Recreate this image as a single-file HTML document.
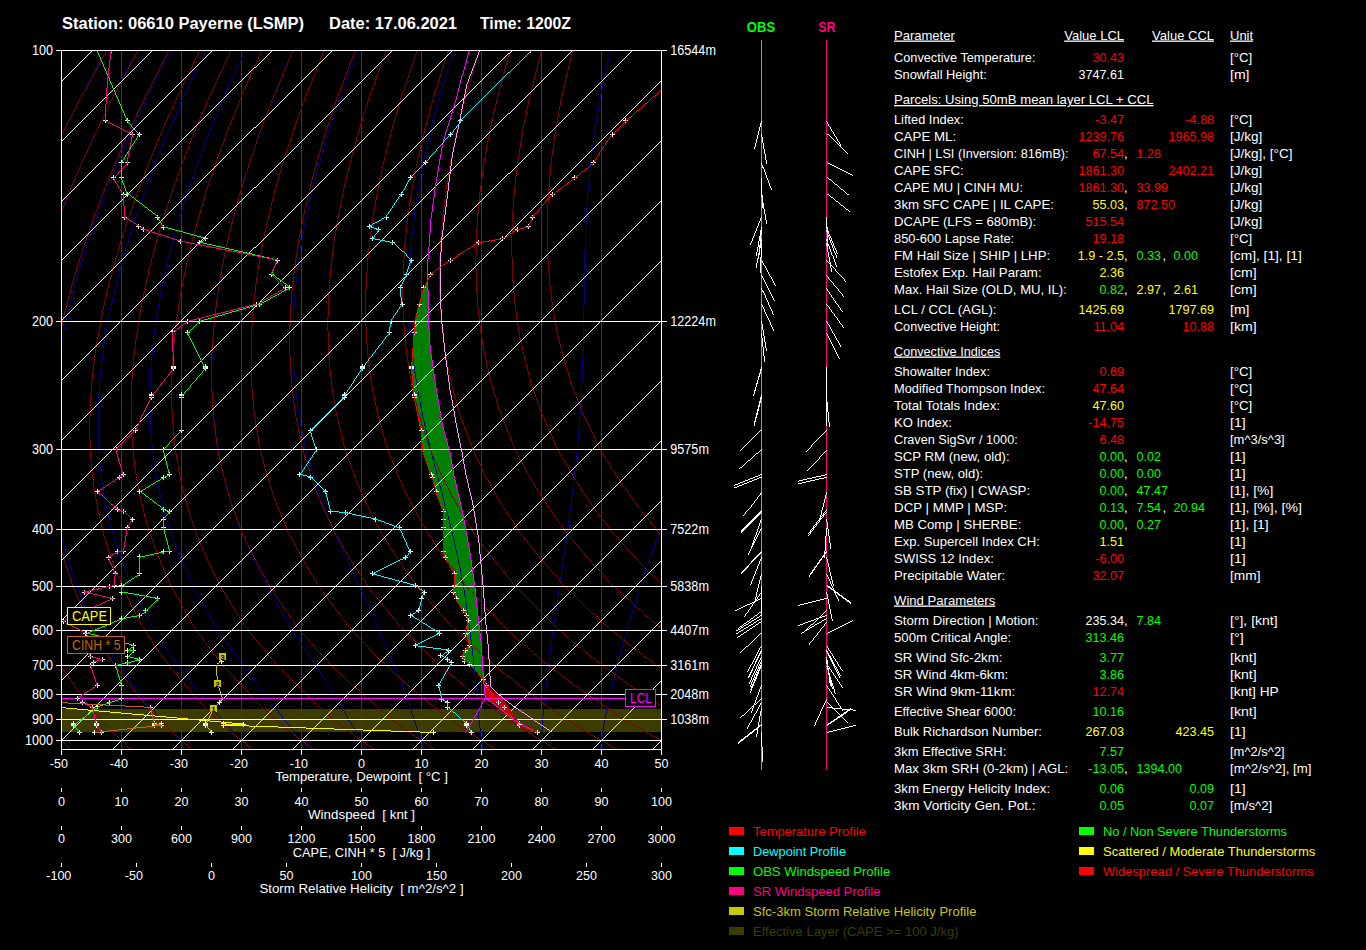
<!DOCTYPE html><html><head><meta charset="utf-8"><title>Sounding 06610 Payerne</title><style>html,body{margin:0;padding:0;background:#000;overflow:hidden}svg{display:block}text{white-space:pre}</style></head><body><svg width="1366" height="950" viewBox="0 0 1366 950" font-family="'Liberation Sans', sans-serif" shape-rendering="crispEdges">
<rect width="1366" height="950" fill="#000"/>
<defs><clipPath id="cp"><rect x="61.5" y="50.5" width="600.0" height="699.0"/></clipPath></defs>
<text x="62" y="28.5" font-size="16" fill="#fff" text-anchor="start" font-weight="bold" textLength="242" lengthAdjust="spacingAndGlyphs" >Station: 06610 Payerne (LSMP)</text>
<text x="329" y="28.5" font-size="16" fill="#fff" text-anchor="start" font-weight="bold" textLength="128" lengthAdjust="spacingAndGlyphs" >Date: 17.06.2021</text>
<text x="480" y="28.5" font-size="16" fill="#fff" text-anchor="start" font-weight="bold" textLength="91" lengthAdjust="spacingAndGlyphs" >Time: 1200Z</text>
<g clip-path="url(#cp)">
<rect x="61.5" y="709" width="600.0" height="23" fill="#3c3c00"/>
<polygon points="427.5,279.5 423.5,287.5 419.0,304.0 415.0,321.0 414.0,332.5 411.5,367.5 414.0,395.5 421.0,430.0 422.5,449.5 431.0,474.5 432.2,477.2 436.0,491.5 443.5,511.0 443.5,519.1 443.5,527.9 443.5,551.9 445.2,557.4 454.0,573.7 454.0,585.5 453.5,592.0 456.0,598.5 463.5,610.8 466.5,615.3 468.0,620.8 465.5,633.1 469.8,645.5 465.0,650.0 462.2,656.2 464.5,661.0 469.8,664.6 483.3,679.2 483.3,679.2 483.3,675.1 482.1,657.6 480.9,640.0 478.6,621.3 474.8,586.3 469.8,551.2 462.3,511.0 454.0,476.0 449.8,451.0 442.2,423.5 436.0,388.0 430.2,348.0 428.5,320.7 428.0,290.0 427.9,279.5" fill="#008000"/>
<line x1="121.5" y1="50.5" x2="121.5" y2="749.5" stroke="#006400" stroke-width="1" />
<line x1="181.5" y1="50.5" x2="181.5" y2="749.5" stroke="#006400" stroke-width="1" />
<line x1="241.5" y1="50.5" x2="241.5" y2="749.5" stroke="#006400" stroke-width="1" />
<line x1="301.5" y1="50.5" x2="301.5" y2="749.5" stroke="#006400" stroke-width="1" />
<line x1="361.5" y1="50.5" x2="361.5" y2="749.5" stroke="#006400" stroke-width="1" />
<line x1="421.5" y1="50.5" x2="421.5" y2="749.5" stroke="#006400" stroke-width="1" />
<line x1="481.5" y1="50.5" x2="481.5" y2="749.5" stroke="#006400" stroke-width="1" />
<line x1="541.5" y1="50.5" x2="541.5" y2="749.5" stroke="#006400" stroke-width="1" />
<line x1="601.5" y1="50.5" x2="601.5" y2="749.5" stroke="#006400" stroke-width="1" />
<polyline points="106.1,50.5 100.4,60.7 94.9,70.9 89.5,80.9 84.2,90.9 79.0,100.8 74.0,110.5 69.1,120.2 64.2,129.8 59.5,139.4 55.0,148.8 50.5,158.1 46.2,167.4 41.9,176.6 37.8,185.7 33.8,194.7 29.9,203.6 26.2,212.5 22.5,221.3 19.0,230.0 15.5,238.6 12.2,247.1 9.0,255.6 5.9,264.0 2.9,272.3 0.0,280.6 -2.8,288.7 -5.4,296.8 -8.0,304.9 -10.4,312.8 -12.8,320.7 -15.0,328.5 -17.2,336.3 -19.2,343.9 -21.1,351.5 -22.9,359.1 -24.6,366.6 -26.2,374.0 -27.8,381.3 -29.2,388.6 -30.5,395.8 -31.7,403.0 -32.8,410.1 -33.8,417.1 -34.7,424.1 -35.5,431.0 -36.2,437.9 -36.8,444.7 -37.3,451.4 -37.7,458.1 -38.1,464.8 -38.3,471.3 -38.4,477.9 -38.4,484.4 -38.4,490.8 -38.2,497.1 -38.0,503.5 -37.6,509.7 -37.2,516.0 -36.6,522.1 -36.0,528.2 -35.3,534.3 -34.5,540.3 -33.6,546.3 -32.6,552.3 -31.5,558.2 -30.4,564.0 -29.1,569.8 -27.8,575.6 -26.4,581.4 -24.9,587.1 -23.3,592.8 -21.7,598.4 -19.9,604.0 -18.1,609.6 -16.2,615.2 -14.2,620.6 -12.1,626.1 -9.9,631.5 -7.6,636.8 -5.2,642.1 -2.7,647.4 -0.1,652.6 2.6,657.8 5.3,662.9 8.2,668.0 11.2,673.0 14.2,678.0 17.3,683.0 20.5,688.0 23.8,693.0 27.1,697.9 30.5,702.9 33.9,707.8 37.5,712.7 41.2,717.5 45.0,722.2 49.0,726.9 53.0,731.5 57.2,736.0 61.5,740.5 61.6,740.6 61.7,740.7 61.8,740.8 61.9,740.9 62.0,741.0 62.0,741.1 62.1,741.2 62.2,741.3 62.3,741.4 62.4,741.5 62.5,741.5 62.6,741.6 62.7,741.7 62.8,741.8 62.9,741.9 63.0,742.0 63.1,742.1 63.2,742.2 63.2,742.3 63.3,742.4 63.4,742.5 63.5,742.6 63.6,742.7 63.7,742.8 63.8,742.9 63.9,743.0 64.0,743.1 64.1,743.2 64.2,743.3 64.3,743.4 64.4,743.4 64.4,743.5 64.5,743.6 64.6,743.7 64.7,743.8 64.8,743.9 64.9,744.0 65.0,744.1 65.1,744.2 65.2,744.3 65.3,744.4 65.4,744.5 65.5,744.6 65.6,744.7 65.6,744.8 65.7,744.9 65.8,745.0 65.9,745.1 66.0,745.2 66.1,745.3 66.2,745.3 66.3,745.4 66.4,745.5 66.5,745.6 66.6,745.7 66.7,745.8 66.8,745.9 66.9,746.0 67.0,746.1 67.0,746.2 67.1,746.3 67.2,746.4 67.3,746.5 67.4,746.6 67.5,746.7 67.6,746.8 67.7,746.9 67.8,747.0 67.9,747.1 68.0,747.2 68.1,747.2 68.2,747.3 68.3,747.4 68.4,747.5 68.4,747.6 68.5,747.7 68.6,747.8 68.7,747.9 68.8,748.0 68.9,748.1 69.0,748.2 69.1,748.3 69.2,748.4 69.3,748.5 69.4,748.6 69.5,748.7 69.6,748.8 69.7,748.9 69.8,749.0 69.9,749.0 69.9,749.1 70.0,749.2 70.1,749.3 70.2,749.4 70.3,749.5 70.4,749.6 70.5,749.7 70.6,749.8 70.7,749.9 70.8,750.0" fill="none" stroke="#000080" stroke-width="0.99" />
<polyline points="137.2,50.5 131.7,60.7 126.4,70.9 121.2,80.9 116.1,90.9 111.2,100.8 106.3,110.5 101.6,120.2 97.0,129.8 92.5,139.4 88.2,148.8 83.9,158.1 79.8,167.4 75.8,176.6 71.9,185.7 68.1,194.7 64.5,203.6 60.9,212.5 57.5,221.3 54.2,230.0 51.0,238.6 47.9,247.1 44.9,255.6 42.0,264.0 39.3,272.3 36.6,280.6 34.1,288.7 31.7,296.8 29.4,304.9 27.2,312.8 25.1,320.7 23.1,328.5 21.2,336.3 19.4,343.9 17.8,351.5 16.2,359.1 14.7,366.6 13.4,374.0 12.1,381.3 11.0,388.6 10.0,395.8 9.0,403.0 8.2,410.1 7.5,417.1 6.8,424.1 6.3,431.0 5.9,437.9 5.5,444.7 5.3,451.4 5.2,458.1 5.1,464.8 5.2,471.3 5.3,477.9 5.6,484.4 6.0,490.8 6.4,497.1 7.0,503.5 7.6,509.7 8.3,516.0 9.2,522.1 10.1,528.2 11.1,534.3 12.2,540.3 13.4,546.3 14.7,552.3 16.1,558.2 17.6,564.0 19.2,569.8 20.8,575.6 22.6,581.4 24.4,587.1 26.3,592.8 28.2,598.4 30.3,604.0 32.5,609.6 34.7,615.2 37.0,620.6 39.5,626.1 42.0,631.5 44.7,636.8 47.4,642.1 50.2,647.4 53.2,652.6 56.2,657.8 59.3,662.9 62.6,668.0 65.9,673.0 69.3,678.0 72.8,683.0 76.3,688.0 80.0,693.0 83.7,697.9 87.4,702.9 91.2,707.8 95.2,712.7 99.3,717.5 103.5,722.2 107.8,726.9 112.3,731.5 116.8,736.0 121.5,740.5 121.6,740.6 121.7,740.7 121.8,740.8 121.9,740.9 122.0,741.0 122.1,741.1 122.2,741.2 122.3,741.3 122.4,741.4 122.5,741.5 122.6,741.5 122.7,741.6 122.8,741.7 122.9,741.8 123.0,741.9 123.1,742.0 123.2,742.1 123.3,742.2 123.4,742.3 123.5,742.4 123.6,742.5 123.7,742.6 123.8,742.7 123.9,742.8 124.0,742.9 124.1,743.0 124.2,743.1 124.3,743.2 124.4,743.3 124.5,743.4 124.6,743.4 124.7,743.5 124.8,743.6 124.9,743.7 125.0,743.8 125.1,743.9 125.2,744.0 125.3,744.1 125.4,744.2 125.5,744.3 125.6,744.4 125.7,744.5 125.8,744.6 125.9,744.7 126.0,744.8 126.1,744.9 126.2,745.0 126.3,745.1 126.4,745.2 126.5,745.3 126.6,745.3 126.7,745.4 126.8,745.5 126.9,745.6 127.0,745.7 127.1,745.8 127.2,745.9 127.3,746.0 127.4,746.1 127.5,746.2 127.6,746.3 127.8,746.4 127.9,746.5 128.0,746.6 128.1,746.7 128.2,746.8 128.3,746.9 128.4,747.0 128.5,747.1 128.6,747.2 128.7,747.2 128.8,747.3 128.9,747.4 129.0,747.5 129.1,747.6 129.2,747.7 129.3,747.8 129.4,747.9 129.5,748.0 129.6,748.1 129.7,748.2 129.8,748.3 129.9,748.4 130.0,748.5 130.1,748.6 130.2,748.7 130.3,748.8 130.4,748.9 130.5,749.0 130.6,749.0 130.7,749.1 130.8,749.2 130.9,749.3 131.0,749.4 131.1,749.5 131.2,749.6 131.3,749.7 131.4,749.8 131.5,749.9 131.6,750.0" fill="none" stroke="#000080" stroke-width="0.99" />
<polyline points="170.7,50.5 165.5,60.7 160.4,70.9 155.4,80.9 150.5,90.9 145.8,100.8 141.2,110.5 136.7,120.2 132.3,129.8 128.1,139.4 124.0,148.8 120.0,158.1 116.1,167.4 112.3,176.6 108.7,185.7 105.1,194.7 101.7,203.6 98.4,212.5 95.2,221.3 92.2,230.0 89.2,238.6 86.4,247.1 83.7,255.6 81.0,264.0 78.5,272.3 76.2,280.6 73.9,288.7 71.7,296.8 69.7,304.9 67.8,312.8 65.9,320.7 64.2,328.5 62.6,336.3 61.1,343.9 59.7,351.5 58.4,359.1 57.2,366.6 56.2,374.0 55.2,381.3 54.3,388.6 53.6,395.8 52.9,403.0 52.4,410.1 51.9,417.1 51.6,424.1 51.4,431.0 51.2,437.9 51.2,444.7 51.3,451.4 51.4,458.1 51.7,464.8 52.1,471.3 52.5,477.9 53.1,484.4 53.8,490.8 54.6,497.1 55.4,503.5 56.4,509.7 57.4,516.0 58.6,522.1 59.8,528.2 61.2,534.3 62.6,540.3 64.2,546.3 65.8,552.3 67.5,558.2 69.4,564.0 71.2,569.8 73.2,575.6 75.3,581.4 77.5,587.1 79.7,592.8 82.0,598.4 84.4,604.0 86.9,609.6 89.5,615.2 92.2,620.6 94.9,626.1 97.8,631.5 100.8,636.8 103.9,642.1 107.0,647.4 110.3,652.6 113.6,657.8 117.1,662.9 120.6,668.0 124.2,673.0 127.9,678.0 131.6,683.0 135.5,688.0 139.3,693.0 143.2,697.9 147.1,702.9 151.1,707.8 155.2,712.7 159.4,717.5 163.6,722.2 166.6,726.9 171.5,731.5 176.4,736.0 181.5,740.5 181.6,740.6 181.7,740.7 181.8,740.8 181.9,740.9 182.0,741.0 182.1,741.1 182.3,741.2 182.4,741.3 182.5,741.4 182.6,741.5 182.7,741.5 182.8,741.6 182.9,741.7 183.0,741.8 183.1,741.9 183.2,742.0 183.3,742.1 183.5,742.2 183.6,742.3 183.7,742.4 183.8,742.5 183.9,742.6 184.0,742.7 184.1,742.8 184.2,742.9 184.3,743.0 184.4,743.1 184.5,743.2 184.7,743.3 184.8,743.4 184.9,743.4 185.0,743.5 185.1,743.6 185.2,743.7 185.3,743.8 185.4,743.9 185.5,744.0 185.6,744.1 185.7,744.2 185.9,744.3 186.0,744.4 186.1,744.5 186.2,744.6 186.3,744.7 186.4,744.8 186.5,744.9 186.6,745.0 186.7,745.1 186.8,745.2 187.0,745.3 187.1,745.3 187.2,745.4 187.3,745.5 187.4,745.6 187.5,745.7 187.6,745.8 187.7,745.9 187.8,746.0 187.9,746.1 188.1,746.2 188.2,746.3 188.3,746.4 188.4,746.5 188.5,746.6 188.6,746.7 188.7,746.8 188.8,746.9 188.9,747.0 189.0,747.1 189.2,747.2 189.3,747.2 189.4,747.3 189.5,747.4 189.6,747.5 189.7,747.6 189.8,747.7 189.9,747.8 190.0,747.9 190.1,748.0 190.3,748.1 190.4,748.2 190.5,748.3 190.6,748.4 190.7,748.5 190.8,748.6 190.9,748.7 191.0,748.8 191.1,748.9 191.3,749.0 191.4,749.0 191.5,749.1 191.6,749.2 191.7,749.3 191.8,749.4 191.9,749.5 192.0,749.6 192.1,749.7 192.3,749.8 192.4,749.9 192.5,750.0" fill="none" stroke="#000080" stroke-width="0.99" />
<polyline points="205.5,50.5 200.5,60.7 195.6,70.9 190.9,80.9 186.2,90.9 181.7,100.8 177.4,110.5 173.1,120.2 169.0,129.8 165.0,139.4 161.1,148.8 157.3,158.1 153.7,167.4 150.2,176.6 146.8,185.7 143.5,194.7 140.3,203.6 137.3,212.5 134.4,221.3 131.6,230.0 128.9,238.6 126.3,247.1 123.8,255.6 121.5,264.0 119.3,272.3 117.2,280.6 115.2,288.7 113.3,296.8 111.5,304.9 109.8,312.8 108.3,320.7 106.8,328.5 105.5,336.3 104.3,343.9 103.2,351.5 102.2,359.1 101.3,366.6 100.5,374.0 99.9,381.3 99.3,388.6 98.8,395.8 98.5,403.0 98.2,410.1 98.1,417.1 98.1,424.1 98.1,431.0 98.3,437.9 98.6,444.7 99.0,451.4 99.4,458.1 100.0,464.8 100.7,471.3 101.5,477.9 102.4,484.4 103.4,490.8 104.5,497.1 105.7,503.5 107.0,509.7 108.4,516.0 109.8,522.1 111.4,528.2 113.1,534.3 114.9,540.3 116.8,546.3 118.7,552.3 120.8,558.2 123.0,564.0 125.2,569.8 127.5,575.6 129.9,581.4 132.4,587.1 135.0,592.8 137.7,598.4 140.4,604.0 143.2,609.6 146.1,615.2 149.1,620.6 152.2,626.1 155.4,631.5 158.7,636.8 162.1,642.1 165.5,647.4 169.1,652.6 172.7,657.8 176.4,662.9 180.1,668.0 184.0,673.0 187.9,678.0 191.8,683.0 195.8,688.0 199.8,693.0 203.8,697.9 207.8,702.9 211.8,707.8 215.9,712.7 220.1,717.5 224.3,722.2 228.5,726.9 232.8,731.5 236.0,736.0 241.5,740.5 241.6,740.6 241.7,740.7 241.8,740.8 242.0,740.9 242.1,741.0 242.2,741.1 242.3,741.2 242.4,741.3 242.6,741.4 242.7,741.5 242.8,741.5 242.9,741.6 243.0,741.7 243.1,741.8 243.3,741.9 243.4,742.0 243.5,742.1 243.6,742.2 243.7,742.3 243.8,742.4 244.0,742.5 244.1,742.6 244.2,742.7 244.3,742.8 244.4,742.9 244.5,743.0 244.7,743.1 244.8,743.2 244.9,743.3 245.0,743.4 245.1,743.4 245.2,743.5 245.4,743.6 245.5,743.7 245.6,743.8 245.7,743.9 245.8,744.0 246.0,744.1 246.1,744.2 246.2,744.3 246.3,744.4 246.4,744.5 246.5,744.6 246.7,744.7 246.8,744.8 246.9,744.9 247.0,745.0 247.1,745.1 247.3,745.2 247.4,745.3 247.5,745.3 247.6,745.4 247.7,745.5 247.8,745.6 248.0,745.7 248.1,745.8 248.2,745.9 248.3,746.0 248.4,746.1 248.6,746.2 247.1,746.3 247.1,746.4 247.2,746.5 247.3,746.6 247.4,746.7 247.5,746.8 247.6,746.9 247.7,747.0 247.8,747.1 247.9,747.2 248.0,747.2 248.1,747.3 248.1,747.4 248.2,747.5 248.3,747.6 248.4,747.7 248.5,747.8 248.6,747.9 248.7,748.0 248.8,748.1 248.9,748.2 249.0,748.3 249.0,748.4 249.1,748.5 249.2,748.6 249.3,748.7 249.4,748.8 249.5,748.9 249.6,749.0 249.7,749.0 249.8,749.1 249.9,749.2 249.9,749.3 250.0,749.4 250.1,749.5 250.2,749.6 250.3,749.7 250.4,749.8 250.5,749.9 250.6,750.0" fill="none" stroke="#000080" stroke-width="0.99" />
<polyline points="244.7,50.5 240.0,60.7 235.4,70.9 230.9,80.9 226.5,90.9 222.3,100.8 218.2,110.5 214.2,120.2 210.4,129.8 206.6,139.4 203.0,148.8 199.5,158.1 196.2,167.4 192.9,176.6 189.8,185.7 186.8,194.7 183.9,203.6 181.2,212.5 178.5,221.3 176.0,230.0 173.6,238.6 171.4,247.1 169.2,255.6 167.1,264.0 165.2,272.3 163.4,280.6 161.7,288.7 160.1,296.8 158.7,304.9 157.3,312.8 156.1,320.7 155.0,328.5 153.9,336.3 153.1,343.9 152.3,351.5 151.6,359.1 151.0,366.6 150.6,374.0 150.2,381.3 150.0,388.6 149.9,395.8 149.9,403.0 150.0,410.1 150.2,417.1 150.5,424.1 150.9,431.0 151.4,437.9 152.0,444.7 152.7,451.4 153.6,458.1 154.5,464.8 155.6,471.3 156.7,477.9 158.0,484.4 159.3,490.8 160.8,497.1 162.3,503.5 164.0,509.7 165.7,516.0 167.6,522.1 169.5,528.2 171.6,534.3 173.7,540.3 176.0,546.3 178.3,552.3 180.7,558.2 183.2,564.0 185.8,569.8 188.5,575.6 191.2,581.4 194.1,587.1 197.0,592.8 199.9,598.4 203.0,604.0 206.1,609.6 209.3,615.2 212.6,620.6 215.9,626.1 219.3,631.5 222.8,636.8 226.4,642.1 230.0,647.4 233.6,652.6 237.3,657.8 241.1,662.9 244.9,668.0 248.7,673.0 252.6,678.0 256.4,683.0 260.3,688.0 264.1,693.0 267.8,697.9 271.6,702.9 275.3,707.8 279.1,712.7 282.8,717.5 286.5,722.2 290.3,726.9 294.1,731.5 297.8,736.0 301.5,740.5 301.6,740.6 301.7,740.7 301.9,740.8 302.0,740.9 302.1,741.0 302.3,741.1 302.4,741.2 302.5,741.3 302.6,741.4 302.8,741.5 302.9,741.5 303.0,741.6 303.1,741.7 303.3,741.8 303.4,741.9 303.5,742.0 303.6,742.1 303.8,742.2 303.9,742.3 304.0,742.4 304.1,742.5 304.3,742.6 304.4,742.7 304.5,742.8 304.6,742.9 304.8,743.0 304.9,743.1 305.0,743.2 305.1,743.3 305.3,743.4 305.4,743.4 305.5,743.5 305.6,743.6 304.1,743.7 304.2,743.8 304.3,743.9 304.4,744.0 304.4,744.1 304.5,744.2 304.6,744.3 304.7,744.4 304.7,744.5 304.8,744.6 304.9,744.7 305.0,744.8 305.0,744.9 305.1,745.0 305.2,745.1 305.3,745.2 305.4,745.3 305.4,745.3 305.5,745.4 305.6,745.5 305.7,745.6 305.7,745.7 305.8,745.8 305.9,745.9 306.0,746.0 306.0,746.1 306.1,746.2 306.2,746.3 306.3,746.4 306.3,746.5 306.4,746.6 306.5,746.7 306.6,746.8 306.6,746.9 306.7,747.0 306.8,747.1 306.9,747.2 306.9,747.2 307.0,747.3 307.1,747.4 307.2,747.5 307.2,747.6 307.3,747.7 307.4,747.8 307.5,747.9 307.5,748.0 307.6,748.1 307.7,748.2 307.8,748.3 307.9,748.4 307.9,748.5 308.0,748.6 308.1,748.7 308.2,748.8 308.2,748.9 308.3,749.0 308.4,749.0 308.4,749.1 308.5,749.2 308.6,749.3 308.7,749.4 308.7,749.5 308.8,749.6 308.9,749.7 309.0,749.8 309.0,749.9 309.1,750.0" fill="none" stroke="#000080" stroke-width="0.99" />
<polyline points="292.7,50.5 288.3,60.7 284.0,70.9 279.9,80.9 275.8,90.9 271.9,100.8 268.1,110.5 264.5,120.2 261.0,129.8 257.6,139.4 254.3,148.8 251.2,158.1 248.1,167.4 245.2,176.6 242.5,185.7 239.8,194.7 237.3,203.6 234.9,212.5 232.6,221.3 230.4,230.0 228.4,238.6 226.5,247.1 224.7,255.6 223.0,264.0 221.5,272.3 220.0,280.6 218.7,288.7 217.5,296.8 216.4,304.9 215.4,312.8 214.6,320.7 213.8,328.5 213.2,336.3 212.7,343.9 212.3,351.5 212.0,359.1 211.9,366.6 211.8,374.0 211.9,381.3 212.0,388.6 212.3,395.8 212.7,403.0 213.2,410.1 213.8,417.1 214.6,424.1 215.4,431.0 216.3,437.9 217.4,444.7 218.5,451.4 219.8,458.1 221.1,464.8 222.6,471.3 224.2,477.9 225.8,484.4 227.6,490.8 229.5,497.1 231.4,503.5 233.5,509.7 235.6,516.0 237.9,522.1 240.2,528.2 242.6,534.3 245.2,540.3 247.8,546.3 250.4,552.3 253.2,558.2 256.0,564.0 258.9,569.8 261.8,575.6 264.8,581.4 267.9,587.1 271.0,592.8 274.1,598.4 277.3,604.0 280.5,609.6 283.7,615.2 287.0,620.6 290.3,626.1 293.6,631.5 297.0,636.8 300.3,642.1 303.7,647.4 307.1,652.6 310.4,657.8 313.8,662.9 317.1,668.0 320.4,673.0 323.7,678.0 326.9,683.0 330.0,688.0 333.1,693.0 336.1,697.9 339.1,702.9 342.0,707.8 344.8,712.7 347.6,717.5 350.5,722.2 353.3,726.9 356.0,731.5 358.8,736.0 361.5,740.5 361.6,740.6 361.8,740.7 361.9,740.8 362.0,740.9 362.2,741.0 362.3,741.1 362.4,741.2 362.6,741.3 362.7,741.4 362.8,741.5 363.0,741.5 363.1,741.6 363.2,741.7 363.4,741.8 363.5,741.9 363.6,742.0 363.8,742.1 363.9,742.2 364.0,742.3 364.2,742.4 362.7,742.5 362.7,742.6 362.8,742.7 362.8,742.8 362.9,742.9 363.0,743.0 363.0,743.1 363.1,743.2 363.1,743.3 363.2,743.4 363.2,743.4 363.3,743.5 363.4,743.6 363.4,743.7 363.5,743.8 363.5,743.9 363.6,744.0 363.6,744.1 363.7,744.2 363.7,744.3 363.8,744.4 363.9,744.5 363.9,744.6 364.0,744.7 364.0,744.8 364.1,744.9 364.1,745.0 364.2,745.1 364.2,745.2 364.3,745.3 364.3,745.3 364.4,745.4 364.5,745.5 364.5,745.6 364.6,745.7 364.6,745.8 364.7,745.9 364.7,746.0 364.8,746.1 364.8,746.2 364.9,746.3 364.9,746.4 365.0,746.5 365.1,746.6 365.1,746.7 365.2,746.8 365.2,746.9 365.3,747.0 365.3,747.1 365.4,747.2 365.4,747.2 365.5,747.3 365.5,747.4 365.6,747.5 365.7,747.6 365.7,747.7 365.8,747.8 365.8,747.9 365.9,748.0 365.9,748.1 366.0,748.2 366.0,748.3 366.1,748.4 366.1,748.5 366.2,748.6 366.2,748.7 366.3,748.8 366.4,748.9 366.4,749.0 366.5,749.0 366.5,749.1 366.6,749.2 366.6,749.3 366.7,749.4 366.7,749.5 366.8,749.6 366.8,749.7 366.9,749.8 366.9,749.9 367.0,750.0" fill="none" stroke="#000080" stroke-width="0.99" />
<polyline points="357.5,50.5 353.5,60.7 349.6,70.9 345.9,80.9 342.3,90.9 338.8,100.8 335.5,110.5 332.3,120.2 329.2,129.8 326.3,139.4 323.4,148.8 320.7,158.1 318.2,167.4 315.8,176.6 313.4,185.7 311.3,194.7 309.2,203.6 307.3,212.5 305.5,221.3 303.8,230.0 302.2,238.6 300.8,247.1 299.5,255.6 298.3,264.0 297.3,272.3 296.3,280.6 295.5,288.7 294.8,296.8 294.2,304.9 293.7,312.8 293.4,320.7 293.2,328.5 293.1,336.3 293.1,343.9 293.2,351.5 293.5,359.1 293.8,366.6 294.3,374.0 294.9,381.3 295.6,388.6 296.4,395.8 297.3,403.0 298.3,410.1 299.4,417.1 300.7,424.1 302.0,431.0 303.4,437.9 305.0,444.7 306.6,451.4 308.3,458.1 310.2,464.8 312.1,471.3 314.1,477.9 316.2,484.4 318.3,490.8 320.6,497.1 322.9,503.5 325.3,509.7 327.7,516.0 330.2,522.1 332.7,528.2 335.3,534.3 338.0,540.3 340.6,546.3 343.3,552.3 346.0,558.2 348.8,564.0 351.5,569.8 354.2,575.6 356.9,581.4 359.6,587.1 362.2,592.8 364.8,598.4 367.4,604.0 370.0,609.6 372.5,615.2 375.0,620.6 377.4,626.1 379.9,631.5 382.2,636.8 384.6,642.1 386.9,647.4 389.1,652.6 391.3,657.8 393.5,662.9 395.6,668.0 397.7,673.0 399.7,678.0 401.6,683.0 403.5,688.0 405.3,693.0 407.1,697.9 408.7,702.9 410.4,707.8 412.0,712.7 413.5,717.5 415.1,722.2 416.7,726.9 418.3,731.5 419.9,736.0 421.5,740.5 421.6,740.6 421.8,740.7 421.9,740.8 422.1,740.9 422.2,741.0 422.4,741.1 422.5,741.2 422.6,741.3 422.8,741.4 422.9,741.5 423.1,741.5 423.2,741.6 423.3,741.7 423.5,741.8 422.0,741.9 422.0,742.0 422.1,742.1 422.1,742.2 422.1,742.3 422.2,742.4 422.2,742.5 422.2,742.6 422.2,742.7 422.3,742.8 422.3,742.9 422.3,743.0 422.4,743.1 422.4,743.2 422.4,743.3 422.5,743.4 422.5,743.4 422.5,743.5 422.6,743.6 422.6,743.7 422.6,743.8 422.7,743.9 422.7,744.0 422.7,744.1 422.8,744.2 422.8,744.3 422.8,744.4 422.9,744.5 422.9,744.6 422.9,744.7 423.0,744.8 423.0,744.9 423.0,745.0 423.1,745.1 423.1,745.2 423.1,745.3 423.1,745.3 423.2,745.4 423.2,745.5 423.2,745.6 423.3,745.7 423.3,745.8 423.3,745.9 423.4,746.0 423.4,746.1 423.4,746.2 423.5,746.3 423.5,746.4 423.5,746.5 423.6,746.6 423.6,746.7 423.6,746.8 423.7,746.9 423.7,747.0 423.7,747.1 423.7,747.2 423.8,747.2 423.8,747.3 423.8,747.4 423.9,747.5 423.9,747.6 423.9,747.7 424.0,747.8 424.0,747.9 424.0,748.0 424.1,748.1 424.1,748.2 424.1,748.3 424.2,748.4 424.2,748.5 424.2,748.6 424.2,748.7 424.3,748.8 424.3,748.9 424.3,749.0 424.4,749.0 424.4,749.1 424.4,749.2 424.5,749.3 424.5,749.4 424.5,749.5 424.6,749.6 424.6,749.7 424.6,749.8 424.6,749.9 424.7,750.0" fill="none" stroke="#000080" stroke-width="0.99" />
<polyline points="453.7,50.5 450.3,60.7 447.1,70.9 444.0,80.9 441.1,90.9 438.2,100.8 435.6,110.5 433.0,120.2 430.6,129.8 428.3,139.4 426.2,148.8 424.2,158.1 422.3,167.4 420.5,176.6 418.9,185.7 417.4,194.7 416.0,203.6 414.8,212.5 413.7,221.3 412.7,230.0 411.9,238.6 411.1,247.1 410.5,255.6 410.1,264.0 409.7,272.3 409.5,280.6 409.3,288.7 409.3,296.8 409.4,304.9 409.7,312.8 410.0,320.7 410.4,328.5 411.0,336.3 411.6,343.9 412.4,351.5 413.3,359.1 414.2,366.6 415.2,374.0 416.4,381.3 417.6,388.6 418.9,395.8 420.2,403.0 421.6,410.1 423.1,417.1 424.6,424.1 426.2,431.0 427.8,437.9 429.5,444.7 431.1,451.4 432.8,458.1 434.5,464.8 436.3,471.3 438.0,477.9 439.7,484.4 441.4,490.8 443.0,497.1 444.7,503.5 446.3,509.7 447.9,516.0 449.5,522.1 451.0,528.2 452.5,534.3 453.9,540.3 455.3,546.3 456.6,552.3 457.9,558.2 459.1,564.0 460.3,569.8 461.4,575.6 462.5,581.4 463.5,587.1 464.5,592.8 465.4,598.4 466.2,604.0 467.0,609.6 467.8,615.2 468.6,620.6 469.3,626.1 470.0,631.5 470.6,636.8 471.3,642.1 471.9,647.4 472.6,652.6 473.2,657.8 473.8,662.9 474.4,668.0 474.9,673.0 475.5,678.0 476.0,683.0 476.5,688.0 476.9,693.0 477.3,697.9 477.7,702.9 478.1,707.8 478.5,712.7 478.9,717.5 479.4,722.2 479.9,726.9 480.4,731.5 480.9,736.0 481.5,740.5 481.7,740.6 481.8,740.7 482.0,740.8 482.1,740.9 482.3,741.0 482.4,741.1 482.6,741.2 482.7,741.3 482.9,741.4 483.0,741.5 483.2,741.5 481.6,741.6 481.7,741.7 481.7,741.8 481.7,741.9 481.7,742.0 481.7,742.1 481.7,742.2 481.7,742.3 481.7,742.4 481.7,742.5 481.8,742.6 481.8,742.7 481.8,742.8 481.8,742.9 481.8,743.0 481.8,743.1 481.8,743.2 481.8,743.3 481.9,743.4 481.9,743.4 481.9,743.5 481.9,743.6 481.9,743.7 481.9,743.8 481.9,743.9 481.9,744.0 481.9,744.1 482.0,744.2 482.0,744.3 482.0,744.4 482.0,744.5 482.0,744.6 482.0,744.7 482.0,744.8 482.0,744.9 482.0,745.0 482.1,745.1 482.1,745.2 482.1,745.3 482.1,745.3 482.1,745.4 482.1,745.5 482.1,745.6 482.1,745.7 482.2,745.8 482.2,745.9 482.2,746.0 482.2,746.1 482.2,746.2 482.2,746.3 482.2,746.4 482.2,746.5 482.2,746.6 482.3,746.7 482.3,746.8 482.3,746.9 482.3,747.0 482.3,747.1 482.3,747.2 482.3,747.2 482.3,747.3 482.3,747.4 482.4,747.5 482.4,747.6 482.4,747.7 482.4,747.8 482.4,747.9 482.4,748.0 482.4,748.1 482.4,748.2 482.4,748.3 482.5,748.4 482.5,748.5 482.5,748.6 482.5,748.7 482.5,748.8 482.5,748.9 482.5,749.0 482.5,749.0 482.5,749.1 482.6,749.2 482.6,749.3 482.6,749.4 482.6,749.5 482.6,749.6 482.6,749.7 482.6,749.8 482.6,749.9 482.6,750.0" fill="none" stroke="#000080" stroke-width="0.99" />
<polyline points="610.3,50.5 607.9,60.7 605.7,70.9 603.6,80.9 601.6,90.9 599.8,100.8 598.1,110.5 596.5,120.2 595.0,129.8 593.6,139.4 592.4,148.8 591.3,158.1 590.3,167.4 589.4,176.6 588.5,185.7 587.8,194.7 587.2,203.6 586.6,212.5 586.2,221.3 585.8,230.0 585.4,238.6 585.1,247.1 584.9,255.6 584.7,264.0 584.5,272.3 584.4,280.6 584.2,288.7 584.1,296.8 584.0,304.9 583.9,312.8 583.8,320.7 583.6,328.5 583.5,336.3 583.3,343.9 583.1,351.5 582.9,359.1 582.7,366.6 582.4,374.0 582.0,381.3 581.7,388.6 581.3,395.8 580.9,403.0 580.4,410.1 579.9,417.1 579.4,424.1 578.9,431.0 578.3,437.9 577.7,444.7 577.0,451.4 576.3,458.1 575.6,464.8 574.9,471.3 574.2,477.9 573.5,484.4 572.7,490.8 571.9,497.1 571.1,503.5 570.3,509.7 569.5,516.0 568.7,522.1 567.8,528.2 567.0,534.3 566.2,540.3 565.3,546.3 564.5,552.3 563.7,558.2 562.8,564.0 562.0,569.8 561.1,575.6 560.3,581.4 559.4,587.1 558.6,592.8 557.7,598.4 556.9,604.0 556.0,609.6 555.2,615.2 554.4,620.6 553.6,626.1 552.8,631.5 552.1,636.8 551.4,642.1 550.7,647.4 550.0,652.6 549.4,657.8 548.8,662.9 548.2,668.0 547.6,673.0 547.1,678.0 546.5,683.0 546.0,688.0 545.4,693.0 544.9,697.9 544.3,702.9 543.8,707.8 543.3,712.7 542.8,717.5 542.5,722.2 542.2,726.9 541.9,731.5 541.7,736.0 541.5,740.5 541.7,740.6 541.8,740.7 542.0,740.8 542.1,740.9 542.3,741.0 542.5,741.1 542.6,741.2 542.8,741.3 542.9,741.4 541.5,741.5 541.5,741.5 541.5,741.6 541.5,741.7 541.4,741.8 541.4,741.9 541.4,742.0 541.4,742.1 541.4,742.2 541.4,742.3 541.4,742.4 541.4,742.5 541.4,742.6 541.4,742.7 541.4,742.8 541.4,742.9 541.4,743.0 541.4,743.1 541.4,743.2 541.4,743.3 541.4,743.4 541.4,743.4 541.4,743.5 541.4,743.6 541.4,743.7 541.4,743.8 541.4,743.9 541.4,744.0 541.4,744.1 541.4,744.2 541.4,744.3 541.3,744.4 541.3,744.5 541.3,744.6 541.3,744.7 541.3,744.8 541.3,744.9 541.3,745.0 541.3,745.1 541.3,745.2 541.3,745.3 541.3,745.3 541.3,745.4 541.3,745.5 541.3,745.6 541.3,745.7 541.3,745.8 541.3,745.9 541.3,746.0 541.3,746.1 541.3,746.2 541.3,746.3 541.3,746.4 541.3,746.5 541.3,746.6 541.3,746.7 541.3,746.8 541.3,746.9 541.3,747.0 541.2,747.1 541.2,747.2 541.2,747.2 541.2,747.3 541.2,747.4 541.2,747.5 541.2,747.6 541.2,747.7 541.2,747.8 541.2,747.9 541.2,748.0 541.2,748.1 541.2,748.2 541.2,748.3 541.2,748.4 541.2,748.5 541.2,748.6 541.2,748.7 541.2,748.8 541.2,748.9 541.2,749.0 541.2,749.0 541.2,749.1 541.2,749.2 541.2,749.3 541.2,749.4 541.2,749.5 541.1,749.6 541.1,749.7 541.1,749.8 541.1,749.9 541.1,750.0" fill="none" stroke="#000080" stroke-width="0.99" />
<polyline points="855.2,50.5 851.5,60.7 847.8,70.9 844.0,80.9 840.3,90.9 836.5,100.8 832.8,110.5 829.0,120.2 825.2,129.8 821.4,139.4 817.7,148.8 813.9,158.1 810.1,167.4 806.3,176.6 802.6,185.7 798.8,194.7 795.1,203.6 791.4,212.5 787.7,221.3 784.0,230.0 780.3,238.6 776.6,247.1 773.0,255.6 769.4,264.0 765.8,272.3 762.3,280.6 758.7,288.7 755.3,296.8 751.8,304.9 748.4,312.8 745.0,320.7 741.6,328.5 738.3,336.3 735.0,343.9 731.7,351.5 728.5,359.1 725.3,366.6 722.1,374.0 719.0,381.3 716.0,388.6 712.9,395.8 709.9,403.0 707.0,410.1 704.1,417.1 701.2,424.1 698.3,431.0 695.6,437.9 692.8,444.7 690.1,451.4 687.4,458.1 684.8,464.8 682.2,471.3 679.6,477.9 677.1,484.4 674.6,490.8 672.2,497.1 669.8,503.5 667.5,509.7 665.2,516.0 662.9,522.1 660.7,528.2 658.5,534.3 656.3,540.3 654.2,546.3 652.1,552.3 650.1,558.2 648.1,564.0 646.1,569.8 644.2,575.6 642.2,581.4 640.4,587.1 638.5,592.8 636.7,598.4 634.9,604.0 633.1,609.6 631.4,615.2 629.7,620.6 628.1,626.1 626.5,631.5 625.0,636.8 623.5,642.1 622.0,647.4 620.6,652.6 619.3,657.8 617.9,662.9 616.7,668.0 615.4,673.0 614.2,678.0 613.1,683.0 611.9,688.0 610.7,693.0 609.6,697.9 608.5,702.9 607.4,707.8 606.3,712.7 605.3,717.5 604.4,722.2 603.6,726.9 602.9,731.5 602.2,736.0 601.5,740.5 601.7,740.6 601.8,740.7 602.0,740.8 602.2,740.9 602.3,741.0 602.5,741.1 602.7,741.2 602.8,741.3 601.4,741.4 601.4,741.5 601.3,741.5 601.3,741.6 601.3,741.7 601.3,741.8 601.3,741.9 601.3,742.0 601.3,742.1 601.3,742.2 601.2,742.3 601.2,742.4 601.2,742.5 601.2,742.6 601.2,742.7 601.2,742.8 601.2,742.9 601.1,743.0 601.1,743.1 601.1,743.2 601.1,743.3 601.1,743.4 601.1,743.4 601.1,743.5 601.1,743.6 601.0,743.7 601.0,743.8 601.0,743.9 601.0,744.0 601.0,744.1 601.0,744.2 601.0,744.3 600.9,744.4 600.9,744.5 600.9,744.6 600.9,744.7 600.9,744.8 600.9,744.9 600.9,745.0 600.9,745.1 600.8,745.2 600.8,745.3 600.8,745.3 600.8,745.4 600.8,745.5 600.8,745.6 600.8,745.7 600.7,745.8 600.7,745.9 600.7,746.0 600.7,746.1 600.7,746.2 600.7,746.3 600.7,746.4 600.7,746.5 600.6,746.6 600.6,746.7 600.6,746.8 600.6,746.9 600.6,747.0 600.6,747.1 600.6,747.2 600.5,747.2 600.5,747.3 600.5,747.4 600.5,747.5 600.5,747.6 600.5,747.7 600.5,747.8 600.5,747.9 600.4,748.0 600.4,748.1 600.4,748.2 600.4,748.3 600.4,748.4 600.4,748.5 600.4,748.6 600.3,748.7 600.3,748.8 600.3,748.9 600.3,749.0 600.3,749.0 600.3,749.1 600.3,749.2 600.3,749.3 600.2,749.4 600.2,749.5 600.2,749.6 600.2,749.7 600.2,749.8 600.2,749.9 600.2,750.0" fill="none" stroke="#000080" stroke-width="0.99" />
<polyline points="106.1,50.5 83.5,92.3 64.6,129.1 48.8,161.8 35.3,191.2 23.9,217.9 14.1,242.1 5.7,264.4 -1.5,284.9 -7.7,303.9 -13.0,321.5 -17.6,338.0 -21.6,353.4 -24.9,367.8 -27.8,381.5 -30.2,394.3 -32.2,406.5 -33.9,418.1 -35.3,429.1 -36.4,439.5 -37.2,449.5 -37.8,459.0 -38.2,468.2 -38.4,476.9 -38.4,485.3 -38.3,493.4 -38.1,501.1 -37.7,508.6 -37.2,515.8 -36.6,522.8 -35.9,529.5 -35.1,536.0 -34.2,542.3 -33.3,548.4 -32.2,554.3 -31.2,560.0 -30.0,565.6 -28.8,571.1 -27.6,576.3 -26.3,581.5 -25.0,586.5 -23.7,591.4 -22.3,596.2 -20.9,600.8 -19.5,605.4 -18.0,609.8 -16.6,614.2 -15.0,618.4 -13.5,622.5 -11.9,626.6 -10.3,630.5 -8.7,634.4 -7.0,638.1 -5.4,641.8 -3.7,645.4 -2.0,648.9 -0.3,652.4 1.5,655.8 3.2,659.1 5.0,662.3 6.8,665.5 8.6,668.6 10.4,671.7 12.2,674.7 14.0,677.7 15.8,680.6 17.6,683.4 19.4,686.3 21.2,689.0 23.0,691.8 24.8,694.5 26.6,697.2 28.4,699.8 30.2,702.4 32.0,705.0 33.7,707.5 35.5,710.0 37.3,712.4 39.1,714.8 41.0,717.2 42.8,719.5 44.6,721.8 46.5,724.0 48.4,726.2 50.2,728.3 52.1,730.4 54.0,732.5 55.9,734.5 57.7,736.5 59.6,738.5 61.5,740.5 63.4,742.4 65.2,744.4 67.1,746.3 69.0,748.1 70.8,750.0" fill="none" stroke="#800000" stroke-width="0.99" />
<polyline points="137.2,50.5 115.4,92.3 97.4,129.1 82.3,161.8 69.6,191.2 58.8,217.9 49.7,242.1 41.9,264.4 35.3,284.9 29.7,303.9 24.9,321.5 20.8,338.0 17.4,353.4 14.5,367.8 12.1,381.5 10.2,394.3 8.6,406.5 7.4,418.1 6.4,429.1 5.8,439.5 5.3,449.5 5.1,459.0 5.1,468.2 5.3,476.9 5.6,485.3 6.1,493.4 6.7,501.1 7.5,508.6 8.3,515.8 9.3,522.8 10.3,529.5 11.4,536.0 12.6,542.3 13.9,548.4 15.2,554.3 16.6,560.0 18.0,565.6 19.5,571.1 21.0,576.3 22.6,581.5 24.2,586.5 25.8,591.4 27.4,596.2 29.1,600.8 30.8,605.4 32.5,609.8 34.3,614.2 36.1,618.4 37.9,622.5 39.7,626.6 41.5,630.5 43.4,634.4 45.3,638.1 47.2,641.8 49.1,645.4 51.1,648.9 53.0,652.4 55.0,655.8 57.0,659.1 59.0,662.3 61.0,665.5 63.0,668.6 65.0,671.7 67.0,674.7 69.0,677.7 71.1,680.6 73.1,683.4 75.1,686.3 77.1,689.0 79.1,691.8 81.1,694.5 83.1,697.2 85.1,699.8 87.1,702.4 89.0,705.0 91.0,707.5 93.0,710.0 95.0,712.4 97.0,714.8 99.0,717.2 101.0,719.5 103.0,721.8 105.1,724.0 107.1,726.2 109.2,728.3 111.2,730.4 113.3,732.5 115.3,734.5 117.4,736.5 119.5,738.5 121.5,740.5 123.5,742.4 125.6,744.4 127.6,746.3 129.6,748.1 131.6,750.0" fill="none" stroke="#800000" stroke-width="0.99" />
<polyline points="168.3,50.5 147.4,92.3 130.1,129.1 115.8,161.8 103.8,191.2 93.7,217.9 85.2,242.1 78.1,264.4 72.1,284.9 67.0,303.9 62.7,321.5 59.2,338.0 56.3,353.4 53.9,367.8 52.0,381.5 50.5,394.3 49.4,406.5 48.6,418.1 48.1,429.1 47.9,439.5 47.9,449.5 48.1,459.0 48.5,468.2 49.0,476.9 49.7,485.3 50.6,493.4 51.5,501.1 52.6,508.6 53.8,515.8 55.1,522.8 56.5,529.5 57.9,536.0 59.5,542.3 61.0,548.4 62.7,554.3 64.4,560.0 66.1,565.6 67.9,571.1 69.7,576.3 71.5,581.5 73.4,586.5 75.3,591.4 77.2,596.2 79.2,600.8 81.1,605.4 83.1,609.8 85.1,614.2 87.2,618.4 89.2,622.5 91.3,626.6 93.4,630.5 95.5,634.4 97.6,638.1 99.8,641.8 102.0,645.4 104.1,648.9 106.3,652.4 108.5,655.8 110.7,659.1 112.9,662.3 115.2,665.5 117.4,668.6 119.6,671.7 121.9,674.7 124.1,677.7 126.3,680.6 128.5,683.4 130.8,686.3 133.0,689.0 135.2,691.8 137.4,694.5 139.6,697.2 141.8,699.8 143.9,702.4 146.1,705.0 148.3,707.5 150.5,710.0 152.7,712.4 154.8,714.8 157.0,717.2 159.2,719.5 161.5,721.8 163.7,724.0 165.9,726.2 168.1,728.3 170.4,730.4 172.6,732.5 174.8,734.5 177.1,736.5 179.3,738.5 181.5,740.5 183.7,742.4 185.9,744.4 188.1,746.3 190.3,748.1 192.5,750.0" fill="none" stroke="#800000" stroke-width="0.99" />
<polyline points="199.3,50.5 179.3,92.3 162.8,129.1 149.3,161.8 138.0,191.2 128.6,217.9 120.8,242.1 114.2,264.4 108.8,284.9 104.3,303.9 100.6,321.5 97.6,338.0 95.2,353.4 93.4,367.8 91.9,381.5 90.9,394.3 90.3,406.5 89.9,418.1 89.8,429.1 90.0,439.5 90.4,449.5 91.0,459.0 91.8,468.2 92.7,476.9 93.8,485.3 95.0,493.4 96.4,501.1 97.8,508.6 99.3,515.8 101.0,522.8 102.7,529.5 104.4,536.0 106.3,542.3 108.2,548.4 110.1,554.3 112.1,560.0 114.2,565.6 116.2,571.1 118.3,576.3 120.5,581.5 122.6,586.5 124.8,591.4 127.0,596.2 129.2,600.8 131.4,605.4 133.7,609.8 136.0,614.2 138.3,618.4 140.6,622.5 142.9,626.6 145.2,630.5 147.6,634.4 150.0,638.1 152.4,641.8 154.8,645.4 157.2,648.9 159.6,652.4 162.0,655.8 164.5,659.1 166.9,662.3 169.3,665.5 171.8,668.6 174.2,671.7 176.7,674.7 179.1,677.7 181.6,680.6 184.0,683.4 186.5,686.3 188.9,689.0 191.3,691.8 193.7,694.5 196.1,697.2 198.5,699.8 200.8,702.4 203.2,705.0 205.6,707.5 207.9,710.0 210.3,712.4 212.7,714.8 215.1,717.2 217.5,719.5 219.9,721.8 222.3,724.0 224.7,726.2 227.1,728.3 229.5,730.4 231.9,732.5 234.3,734.5 236.7,736.5 239.1,738.5 241.5,740.5 243.9,742.4 246.3,744.4 248.6,746.3 251.0,748.1 253.3,750.0" fill="none" stroke="#800000" stroke-width="0.99" />
<polyline points="230.4,50.5 211.2,92.3 195.6,129.1 182.8,161.8 172.2,191.2 163.5,217.9 156.3,242.1 150.4,264.4 145.6,284.9 141.7,303.9 138.5,321.5 136.1,338.0 134.2,353.4 132.8,367.8 131.8,381.5 131.3,394.3 131.1,406.5 131.2,418.1 131.5,429.1 132.1,439.5 133.0,449.5 134.0,459.0 135.1,468.2 136.4,476.9 137.9,485.3 139.5,493.4 141.2,501.1 143.0,508.6 144.8,515.8 146.8,522.8 148.8,529.5 150.9,536.0 153.1,542.3 155.3,548.4 157.6,554.3 159.9,560.0 162.2,565.6 164.6,571.1 167.0,576.3 169.4,581.5 171.8,586.5 174.3,591.4 176.8,596.2 179.3,600.8 181.8,605.4 184.3,609.8 186.8,614.2 189.4,618.4 191.9,622.5 194.5,626.6 197.1,630.5 199.7,634.4 202.3,638.1 204.9,641.8 207.6,645.4 210.2,648.9 212.9,652.4 215.5,655.8 218.2,659.1 220.9,662.3 223.5,665.5 226.2,668.6 228.9,671.7 231.5,674.7 234.2,677.7 236.9,680.6 239.5,683.4 242.1,686.3 244.8,689.0 247.4,691.8 250.0,694.5 252.6,697.2 255.2,699.8 257.7,702.4 260.3,705.0 262.9,707.5 265.4,710.0 268.0,712.4 270.5,714.8 273.1,717.2 275.7,719.5 278.3,721.8 280.8,724.0 283.4,726.2 286.0,728.3 288.6,730.4 291.2,732.5 293.8,734.5 296.4,736.5 298.9,738.5 301.5,740.5 304.1,742.4 306.6,744.4 309.1,746.3 311.7,748.1 314.2,750.0" fill="none" stroke="#800000" stroke-width="0.99" />
<polyline points="261.5,50.5 243.2,92.3 228.3,129.1 216.3,161.8 206.4,191.2 198.4,217.9 191.9,242.1 186.6,264.4 182.3,284.9 179.0,303.9 176.4,321.5 174.5,338.0 173.1,353.4 172.2,367.8 171.8,381.5 171.7,394.3 171.9,406.5 172.5,418.1 173.3,429.1 174.3,439.5 175.5,449.5 176.9,459.0 178.5,468.2 180.2,476.9 182.0,485.3 183.9,493.4 186.0,501.1 188.1,508.6 190.4,515.8 192.7,522.8 195.0,529.5 197.5,536.0 199.9,542.3 202.5,548.4 205.0,554.3 207.6,560.0 210.3,565.6 212.9,571.1 215.6,576.3 218.3,581.5 221.1,586.5 223.8,591.4 226.5,596.2 229.3,600.8 232.1,605.4 234.9,609.8 237.7,614.2 240.5,618.4 243.3,622.5 246.1,626.6 248.9,630.5 251.8,634.4 254.7,638.1 257.5,641.8 260.4,645.4 263.3,648.9 266.2,652.4 269.1,655.8 271.9,659.1 274.8,662.3 277.7,665.5 280.6,668.6 283.5,671.7 286.4,674.7 289.2,677.7 292.1,680.6 295.0,683.4 297.8,686.3 300.7,689.0 303.5,691.8 306.3,694.5 309.1,697.2 311.8,699.8 314.6,702.4 317.4,705.0 320.1,707.5 322.9,710.0 325.6,712.4 328.4,714.8 331.1,717.2 333.9,719.5 336.7,721.8 339.4,724.0 342.2,726.2 345.0,728.3 347.7,730.4 350.5,732.5 353.3,734.5 356.0,736.5 358.8,738.5 361.5,740.5 364.2,742.4 366.9,744.4 369.6,746.3 372.3,748.1 375.0,750.0" fill="none" stroke="#800000" stroke-width="0.99" />
<polyline points="292.6,50.5 275.1,92.3 261.1,129.1 249.8,161.8 240.6,191.2 233.3,217.9 227.4,242.1 222.7,264.4 219.1,284.9 216.3,303.9 214.3,321.5 212.9,338.0 212.0,353.4 211.6,367.8 211.7,381.5 212.1,394.3 212.8,406.5 213.7,418.1 215.0,429.1 216.4,439.5 218.0,449.5 219.8,459.0 221.8,468.2 223.9,476.9 226.1,485.3 228.4,493.4 230.8,501.1 233.3,508.6 235.9,515.8 238.5,522.8 241.2,529.5 244.0,536.0 246.8,542.3 249.6,548.4 252.5,554.3 255.4,560.0 258.3,565.6 261.3,571.1 264.3,576.3 267.3,581.5 270.3,586.5 273.3,591.4 276.3,596.2 279.3,600.8 282.4,605.4 285.4,609.8 288.5,614.2 291.6,618.4 294.6,622.5 297.7,626.6 300.8,630.5 303.9,634.4 307.0,638.1 310.1,641.8 313.2,645.4 316.3,648.9 319.5,652.4 322.6,655.8 325.7,659.1 328.8,662.3 331.9,665.5 335.0,668.6 338.1,671.7 341.2,674.7 344.3,677.7 347.4,680.6 350.4,683.4 353.5,686.3 356.5,689.0 359.6,691.8 362.6,694.5 365.6,697.2 368.5,699.8 371.5,702.4 374.5,705.0 377.4,707.5 380.4,710.0 383.3,712.4 386.2,714.8 389.2,717.2 392.1,719.5 395.1,721.8 398.0,724.0 401.0,726.2 403.9,728.3 406.9,730.4 409.8,732.5 412.7,734.5 415.7,736.5 418.6,738.5 421.5,740.5 424.4,742.4 427.3,744.4 430.2,746.3 433.0,748.1 435.8,750.0" fill="none" stroke="#800000" stroke-width="0.99" />
<polyline points="323.6,50.5 307.0,92.3 293.8,129.1 283.3,161.8 274.8,191.2 268.2,217.9 262.9,242.1 258.9,264.4 255.9,284.9 253.7,303.9 252.2,321.5 251.3,338.0 251.0,353.4 251.1,367.8 251.6,381.5 252.4,394.3 253.6,406.5 255.0,418.1 256.7,429.1 258.5,439.5 260.6,449.5 262.8,459.0 265.1,468.2 267.6,476.9 270.2,485.3 272.8,493.4 275.6,501.1 278.5,508.6 281.4,515.8 284.3,522.8 287.4,529.5 290.5,536.0 293.6,542.3 296.8,548.4 300.0,554.3 303.2,560.0 306.4,565.6 309.7,571.1 312.9,576.3 316.2,581.5 319.5,586.5 322.8,591.4 326.1,596.2 329.4,600.8 332.7,605.4 336.0,609.8 339.3,614.2 342.7,618.4 346.0,622.5 349.3,626.6 352.7,630.5 356.0,634.4 359.3,638.1 362.7,641.8 366.0,645.4 369.4,648.9 372.7,652.4 376.1,655.8 379.4,659.1 382.8,662.3 386.1,665.5 389.4,668.6 392.7,671.7 396.1,674.7 399.4,677.7 402.6,680.6 405.9,683.4 409.2,686.3 412.4,689.0 415.7,691.8 418.9,694.5 422.1,697.2 425.2,699.8 428.4,702.4 431.5,705.0 434.7,707.5 437.8,710.0 441.0,712.4 444.1,714.8 447.2,717.2 450.3,719.5 453.5,721.8 456.6,724.0 459.7,726.2 462.9,728.3 466.0,730.4 469.1,732.5 472.2,734.5 475.3,736.5 478.4,738.5 481.5,740.5 484.6,742.4 487.6,744.4 490.7,746.3 493.7,748.1 496.7,750.0" fill="none" stroke="#800000" stroke-width="0.99" />
<polyline points="354.7,50.5 339.0,92.3 326.5,129.1 316.8,161.8 309.1,191.2 303.1,217.9 298.5,242.1 295.1,264.4 292.6,284.9 291.0,303.9 290.1,321.5 289.7,338.0 289.9,353.4 290.5,367.8 291.5,381.5 292.8,394.3 294.4,406.5 296.3,418.1 298.4,429.1 300.7,439.5 303.1,449.5 305.7,459.0 308.4,468.2 311.3,476.9 314.2,485.3 317.3,493.4 320.4,501.1 323.6,508.6 326.9,515.8 330.2,522.8 333.6,529.5 337.0,536.0 340.4,542.3 343.9,548.4 347.4,554.3 350.9,560.0 354.5,565.6 358.0,571.1 361.6,576.3 365.2,581.5 368.7,586.5 372.3,591.4 375.9,596.2 379.4,600.8 383.0,605.4 386.6,609.8 390.2,614.2 393.8,618.4 397.3,622.5 400.9,626.6 404.5,630.5 408.1,634.4 411.7,638.1 415.3,641.8 418.9,645.4 422.4,648.9 426.0,652.4 429.6,655.8 433.2,659.1 436.7,662.3 440.3,665.5 443.8,668.6 447.4,671.7 450.9,674.7 454.4,677.7 457.9,680.6 461.4,683.4 464.9,686.3 468.3,689.0 471.7,691.8 475.2,694.5 478.6,697.2 481.9,699.8 485.3,702.4 488.6,705.0 492.0,707.5 495.3,710.0 498.6,712.4 501.9,714.8 505.2,717.2 508.6,719.5 511.9,721.8 515.2,724.0 518.5,726.2 521.8,728.3 525.1,730.4 528.4,732.5 531.7,734.5 535.0,736.5 538.2,738.5 541.5,740.5 544.7,742.4 548.0,744.4 551.2,746.3 554.4,748.1 557.5,750.0" fill="none" stroke="#800000" stroke-width="0.99" />
<polyline points="385.8,50.5 370.9,92.3 359.3,129.1 350.2,161.8 343.3,191.2 338.0,217.9 334.0,242.1 331.2,264.4 329.4,284.9 328.3,303.9 327.9,321.5 328.1,338.0 328.8,353.4 329.9,367.8 331.4,381.5 333.2,394.3 335.3,406.5 337.6,418.1 340.1,429.1 342.8,439.5 345.6,449.5 348.6,459.0 351.8,468.2 355.0,476.9 358.3,485.3 361.7,493.4 365.2,501.1 368.8,508.6 372.4,515.8 376.0,522.8 379.7,529.5 383.5,536.0 387.3,542.3 391.0,548.4 394.9,554.3 398.7,560.0 402.5,565.6 406.4,571.1 410.2,576.3 414.1,581.5 417.9,586.5 421.8,591.4 425.6,596.2 429.5,600.8 433.3,605.4 437.2,609.8 441.0,614.2 444.9,618.4 448.7,622.5 452.5,626.6 456.4,630.5 460.2,634.4 464.0,638.1 467.9,641.8 471.7,645.4 475.5,648.9 479.3,652.4 483.1,655.8 486.9,659.1 490.7,662.3 494.5,665.5 498.2,668.6 502.0,671.7 505.7,674.7 509.5,677.7 513.2,680.6 516.9,683.4 520.5,686.3 524.2,689.0 527.8,691.8 531.5,694.5 535.0,697.2 538.6,699.8 542.2,702.4 545.7,705.0 549.2,707.5 552.8,710.0 556.3,712.4 559.8,714.8 563.3,717.2 566.8,719.5 570.3,721.8 573.8,724.0 577.3,726.2 580.8,728.3 584.3,730.4 587.7,732.5 591.2,734.5 594.6,736.5 598.1,738.5 601.5,740.5 604.9,742.4 608.3,744.4 611.7,746.3 615.0,748.1 618.4,750.0" fill="none" stroke="#800000" stroke-width="0.99" />
<polyline points="416.9,50.5 402.8,92.3 392.0,129.1 383.7,161.8 377.5,191.2 372.9,217.9 369.6,242.1 367.4,264.4 366.1,284.9 365.7,303.9 365.8,321.5 366.5,338.0 367.7,353.4 369.3,367.8 371.3,381.5 373.6,394.3 376.1,406.5 378.8,418.1 381.8,429.1 384.9,439.5 388.2,449.5 391.6,459.0 395.1,468.2 398.7,476.9 402.4,485.3 406.2,493.4 410.0,501.1 413.9,508.6 417.9,515.8 421.9,522.8 425.9,529.5 430.0,536.0 434.1,542.3 438.2,548.4 442.3,554.3 446.5,560.0 450.6,565.6 454.7,571.1 458.9,576.3 463.0,581.5 467.2,586.5 471.3,591.4 475.4,596.2 479.5,600.8 483.6,605.4 487.8,609.8 491.9,614.2 495.9,618.4 500.0,622.5 504.1,626.6 508.2,630.5 512.3,634.4 516.4,638.1 520.4,641.8 524.5,645.4 528.5,648.9 532.6,652.4 536.6,655.8 540.6,659.1 544.7,662.3 548.7,665.5 552.6,668.6 556.6,671.7 560.6,674.7 564.5,677.7 568.4,680.6 572.3,683.4 576.2,686.3 580.1,689.0 583.9,691.8 587.7,694.5 591.5,697.2 595.3,699.8 599.1,702.4 602.8,705.0 606.5,707.5 610.2,710.0 613.9,712.4 617.6,714.8 621.3,717.2 625.0,719.5 628.7,721.8 632.4,724.0 636.0,726.2 639.7,728.3 643.4,730.4 647.0,732.5 650.7,734.5 654.3,736.5 657.9,738.5 661.5,740.5 665.1,742.4 668.6,744.4 672.2,746.3 675.7,748.1 679.2,750.0" fill="none" stroke="#800000" stroke-width="0.99" />
<polyline points="448.0,50.5 434.8,92.3 424.8,129.1 417.2,161.8 411.7,191.2 407.8,217.9 405.1,242.1 403.6,264.4 402.9,284.9 403.0,303.9 403.7,321.5 405.0,338.0 406.7,353.4 408.8,367.8 411.2,381.5 413.9,394.3 416.9,406.5 420.1,418.1 423.5,429.1 427.0,439.5 430.7,449.5 434.5,459.0 438.4,468.2 442.4,476.9 446.5,485.3 450.6,493.4 454.9,501.1 459.1,508.6 463.4,515.8 467.7,522.8 472.1,529.5 476.5,536.0 480.9,542.3 485.3,548.4 489.8,554.3 494.2,560.0 498.7,565.6 503.1,571.1 507.5,576.3 512.0,581.5 516.4,586.5 520.8,591.4 525.2,596.2 529.6,600.8 534.0,605.4 538.3,609.8 542.7,614.2 547.0,618.4 551.4,622.5 555.7,626.6 560.1,630.5 564.4,634.4 568.7,638.1 573.0,641.8 577.3,645.4 581.6,648.9 585.9,652.4 590.1,655.8 594.4,659.1 598.6,662.3 602.8,665.5 607.1,668.6 611.2,671.7 615.4,674.7 619.6,677.7 623.7,680.6 627.8,683.4 631.9,686.3 636.0,689.0 640.0,691.8 644.0,694.5 648.0,697.2 652.0,699.8 656.0,702.4 659.9,705.0 663.8,707.5 667.7,710.0 671.6,712.4 675.5,714.8 679.4,717.2 683.2,719.5 687.1,721.8 691.0,724.0 694.8,726.2 698.7,728.3 702.5,730.4 706.3,732.5 710.1,734.5 713.9,736.5 717.7,738.5 721.5,740.5 725.3,742.4 729.0,744.4 732.7,746.3 736.4,748.1 740.1,750.0" fill="none" stroke="#800000" stroke-width="0.99" />
<polyline points="479.0,50.5 466.7,92.3 457.5,129.1 450.7,161.8 445.9,191.2 442.7,217.9 440.7,242.1 439.7,264.4 439.7,284.9 440.3,303.9 441.6,321.5 443.4,338.0 445.6,353.4 448.2,367.8 451.1,381.5 454.3,394.3 457.8,406.5 461.4,418.1 465.2,429.1 469.2,439.5 473.3,449.5 477.5,459.0 481.8,468.2 486.1,476.9 490.6,485.3 495.1,493.4 499.7,501.1 504.3,508.6 508.9,515.8 513.6,522.8 518.3,529.5 523.0,536.0 527.7,542.3 532.5,548.4 537.2,554.3 542.0,560.0 546.7,565.6 551.5,571.1 556.2,576.3 560.9,581.5 565.6,586.5 570.3,591.4 575.0,596.2 579.6,600.8 584.3,605.4 588.9,609.8 593.5,614.2 598.1,618.4 602.7,622.5 607.3,626.6 611.9,630.5 616.5,634.4 621.0,638.1 625.6,641.8 630.1,645.4 634.6,648.9 639.2,652.4 643.6,655.8 648.1,659.1 652.6,662.3 657.0,665.5 661.5,668.6 665.9,671.7 670.3,674.7 674.6,677.7 679.0,680.6 683.3,683.4 687.6,686.3 691.9,689.0 696.1,691.8 700.3,694.5 704.5,697.2 708.7,699.8 712.8,702.4 717.0,705.0 721.1,707.5 725.2,710.0 729.3,712.4 733.3,714.8 737.4,717.2 741.4,719.5 745.5,721.8 749.5,724.0 753.6,726.2 757.6,728.3 761.6,730.4 765.6,732.5 769.6,734.5 773.6,736.5 777.6,738.5 781.5,740.5 785.4,742.4 789.3,744.4 793.2,746.3 797.1,748.1 800.9,750.0" fill="none" stroke="#800000" stroke-width="0.99" />
<polyline points="510.1,50.5 498.6,92.3 490.2,129.1 484.2,161.8 480.1,191.2 477.5,217.9 476.2,242.1 475.9,264.4 476.4,284.9 477.7,303.9 479.5,321.5 481.8,338.0 484.5,353.4 487.6,367.8 491.0,381.5 494.7,394.3 498.6,406.5 502.7,418.1 506.9,429.1 511.3,439.5 515.8,449.5 520.4,459.0 525.1,468.2 529.8,476.9 534.7,485.3 539.5,493.4 544.5,501.1 549.4,508.6 554.4,515.8 559.4,522.8 564.5,529.5 569.5,536.0 574.6,542.3 579.6,548.4 584.7,554.3 589.7,560.0 594.8,565.6 599.8,571.1 604.8,576.3 609.8,581.5 614.8,586.5 619.8,591.4 624.7,596.2 629.7,600.8 634.6,605.4 639.5,609.8 644.4,614.2 649.2,618.4 654.1,622.5 658.9,626.6 663.8,630.5 668.6,634.4 673.4,638.1 678.2,641.8 682.9,645.4 687.7,648.9 692.4,652.4 697.2,655.8 701.9,659.1 706.5,662.3 711.2,665.5 715.9,668.6 720.5,671.7 725.1,674.7 729.7,677.7 734.2,680.6 738.8,683.4 743.3,686.3 747.8,689.0 752.2,691.8 756.6,694.5 761.0,697.2 765.4,699.8 769.7,702.4 774.1,705.0 778.4,707.5 782.6,710.0 786.9,712.4 791.2,714.8 795.4,717.2 799.7,719.5 803.9,721.8 808.1,724.0 812.4,726.2 816.6,728.3 820.8,730.4 824.9,732.5 829.1,734.5 833.3,736.5 837.4,738.5 841.5,740.5 845.6,742.4 849.7,744.4 853.7,746.3 857.7,748.1 861.7,750.0" fill="none" stroke="#800000" stroke-width="0.99" />
<polyline points="541.2,50.5 530.6,92.3 523.0,129.1 517.7,161.8 514.3,191.2 512.4,217.9 511.8,242.1 512.1,264.4 513.2,284.9 515.0,303.9 517.4,321.5 520.2,338.0 523.5,353.4 527.1,367.8 530.9,381.5 535.1,394.3 539.4,406.5 543.9,418.1 548.6,429.1 553.4,439.5 558.3,449.5 563.3,459.0 568.4,468.2 573.6,476.9 578.8,485.3 584.0,493.4 589.3,501.1 594.6,508.6 599.9,515.8 605.3,522.8 610.6,529.5 616.0,536.0 621.4,542.3 626.8,548.4 632.1,554.3 637.5,560.0 642.8,565.6 648.2,571.1 653.5,576.3 658.8,581.5 664.0,586.5 669.3,591.4 674.5,596.2 679.7,600.8 684.9,605.4 690.1,609.8 695.2,614.2 700.3,618.4 705.5,622.5 710.5,626.6 715.6,630.5 720.7,634.4 725.7,638.1 730.8,641.8 735.8,645.4 740.8,648.9 745.7,652.4 750.7,655.8 755.6,659.1 760.5,662.3 765.4,665.5 770.3,668.6 775.1,671.7 779.9,674.7 784.7,677.7 789.5,680.6 794.3,683.4 799.0,686.3 803.6,689.0 808.3,691.8 812.9,694.5 817.5,697.2 822.1,699.8 826.6,702.4 831.1,705.0 835.6,707.5 840.1,710.0 844.6,712.4 849.0,714.8 853.5,717.2 857.9,719.5 862.3,721.8 866.7,724.0 871.1,726.2 875.5,728.3 879.9,730.4 884.2,732.5 888.6,734.5 892.9,736.5 897.2,738.5 901.5,740.5 905.8,742.4 910.0,744.4 914.2,746.3 918.4,748.1 922.6,750.0" fill="none" stroke="#800000" stroke-width="0.99" />
<polyline points="572.3,50.5 562.5,92.3 555.7,129.1 551.2,161.8 548.6,191.2 547.3,217.9 547.3,242.1 548.2,264.4 549.9,284.9 552.3,303.9 555.2,321.5 558.6,338.0 562.4,353.4 566.5,367.8 570.9,381.5 575.5,394.3 580.3,406.5 585.2,418.1 590.3,429.1 595.5,439.5 600.9,449.5 606.3,459.0 611.7,468.2 617.3,476.9 622.8,485.3 628.5,493.4 634.1,501.1 639.8,508.6 645.4,515.8 651.1,522.8 656.8,529.5 662.5,536.0 668.2,542.3 673.9,548.4 679.6,554.3 685.3,560.0 690.9,565.6 696.5,571.1 702.1,576.3 707.7,581.5 713.3,586.5 718.8,591.4 724.3,596.2 729.8,600.8 735.2,605.4 740.6,609.8 746.1,614.2 751.4,618.4 756.8,622.5 762.1,626.6 767.5,630.5 772.8,634.4 778.1,638.1 783.3,641.8 788.6,645.4 793.8,648.9 799.0,652.4 804.2,655.8 809.3,659.1 814.5,662.3 819.6,665.5 824.7,668.6 829.7,671.7 834.8,674.7 839.8,677.7 844.8,680.6 849.7,683.4 854.6,686.3 859.5,689.0 864.4,691.8 869.2,694.5 874.0,697.2 878.8,699.8 883.5,702.4 888.2,705.0 892.9,707.5 897.6,710.0 902.2,712.4 906.9,714.8 911.5,717.2 916.1,719.5 920.7,721.8 925.3,724.0 929.9,726.2 934.5,728.3 939.0,730.4 943.5,732.5 948.1,734.5 952.6,736.5 957.0,738.5 961.5,740.5 965.9,742.4 970.3,744.4 974.7,746.3 979.1,748.1 983.4,750.0" fill="none" stroke="#800000" stroke-width="0.99" />
<line x1="-667.5" y1="749.5" x2="31.5" y2="50.5" stroke="#fff" stroke-width="0.99" />
<line x1="-607.5" y1="749.5" x2="91.5" y2="50.5" stroke="#fff" stroke-width="0.99" />
<line x1="-547.5" y1="749.5" x2="151.5" y2="50.5" stroke="#fff" stroke-width="0.99" />
<line x1="-487.5" y1="749.5" x2="211.5" y2="50.5" stroke="#fff" stroke-width="0.99" />
<line x1="-427.5" y1="749.5" x2="271.5" y2="50.5" stroke="#fff" stroke-width="0.99" />
<line x1="-367.5" y1="749.5" x2="331.5" y2="50.5" stroke="#fff" stroke-width="0.99" />
<line x1="-307.5" y1="749.5" x2="391.5" y2="50.5" stroke="#fff" stroke-width="0.99" />
<line x1="-247.5" y1="749.5" x2="451.5" y2="50.5" stroke="#fff" stroke-width="0.99" />
<line x1="-187.5" y1="749.5" x2="511.5" y2="50.5" stroke="#fff" stroke-width="0.99" />
<line x1="-127.5" y1="749.5" x2="571.5" y2="50.5" stroke="#fff" stroke-width="0.99" />
<line x1="-67.5" y1="749.5" x2="631.5" y2="50.5" stroke="#fff" stroke-width="0.99" />
<line x1="-7.5" y1="749.5" x2="691.5" y2="50.5" stroke="#fff" stroke-width="0.99" />
<line x1="52.5" y1="749.5" x2="751.5" y2="50.5" stroke="#fff" stroke-width="0.99" />
<line x1="112.5" y1="749.5" x2="811.5" y2="50.5" stroke="#fff" stroke-width="0.99" />
<line x1="172.5" y1="749.5" x2="871.5" y2="50.5" stroke="#fff" stroke-width="0.99" />
<line x1="232.5" y1="749.5" x2="931.5" y2="50.5" stroke="#fff" stroke-width="0.99" />
<line x1="292.5" y1="749.5" x2="991.5" y2="50.5" stroke="#fff" stroke-width="0.99" />
<line x1="352.5" y1="749.5" x2="1051.5" y2="50.5" stroke="#fff" stroke-width="0.99" />
<line x1="412.5" y1="749.5" x2="1111.5" y2="50.5" stroke="#fff" stroke-width="0.99" />
<line x1="472.5" y1="749.5" x2="1171.5" y2="50.5" stroke="#fff" stroke-width="0.99" />
<line x1="532.5" y1="749.5" x2="1231.5" y2="50.5" stroke="#fff" stroke-width="0.99" />
<line x1="592.5" y1="749.5" x2="1291.5" y2="50.5" stroke="#fff" stroke-width="0.99" />
<line x1="652.5" y1="749.5" x2="1351.5" y2="50.5" stroke="#fff" stroke-width="0.99" />
<line x1="61.5" y1="321.5" x2="661.5" y2="321.5" stroke="#fff" stroke-width="1" />
<line x1="61.5" y1="449.5" x2="661.5" y2="449.5" stroke="#fff" stroke-width="1" />
<line x1="61.5" y1="529.5" x2="661.5" y2="529.5" stroke="#fff" stroke-width="1" />
<line x1="61.5" y1="586.5" x2="661.5" y2="586.5" stroke="#fff" stroke-width="1" />
<line x1="61.5" y1="630.5" x2="661.5" y2="630.5" stroke="#fff" stroke-width="1" />
<line x1="61.5" y1="665.5" x2="661.5" y2="665.5" stroke="#fff" stroke-width="1" />
<line x1="61.5" y1="694.5" x2="661.5" y2="694.5" stroke="#fff" stroke-width="1" />
<line x1="61.5" y1="719.5" x2="661.5" y2="719.5" stroke="#fff" stroke-width="1" />
<line x1="61.5" y1="740.5" x2="661.5" y2="740.5" stroke="#fff" stroke-width="1" />
</g>
<rect x="61.5" y="50.5" width="600.0" height="699.0" fill="none" stroke="#fff"/>
<line x1="56.0" y1="50.5" x2="61.5" y2="50.5" stroke="#fff" stroke-width="1" />
<text x="53" y="55.1" font-size="14" fill="#fff" text-anchor="end" font-weight="normal" textLength="21.0" lengthAdjust="spacingAndGlyphs" >100</text>
<line x1="661.5" y1="50.5" x2="667.0" y2="50.5" stroke="#fff" stroke-width="1" />
<text x="670.3" y="55.1" font-size="14" fill="#fff" text-anchor="start" font-weight="normal" textLength="45.6" lengthAdjust="spacingAndGlyphs" >16544m</text>
<line x1="56.0" y1="321.5" x2="61.5" y2="321.5" stroke="#fff" stroke-width="1" />
<text x="53" y="326.1" font-size="14" fill="#fff" text-anchor="end" font-weight="normal" textLength="21.0" lengthAdjust="spacingAndGlyphs" >200</text>
<line x1="661.5" y1="321.5" x2="667.0" y2="321.5" stroke="#fff" stroke-width="1" />
<text x="670.3" y="326.1" font-size="14" fill="#fff" text-anchor="start" font-weight="normal" textLength="45.6" lengthAdjust="spacingAndGlyphs" >12224m</text>
<line x1="56.0" y1="449.5" x2="61.5" y2="449.5" stroke="#fff" stroke-width="1" />
<text x="53" y="454.1" font-size="14" fill="#fff" text-anchor="end" font-weight="normal" textLength="21.0" lengthAdjust="spacingAndGlyphs" >300</text>
<line x1="661.5" y1="449.5" x2="667.0" y2="449.5" stroke="#fff" stroke-width="1" />
<text x="670.3" y="454.1" font-size="14" fill="#fff" text-anchor="start" font-weight="normal" textLength="38.6" lengthAdjust="spacingAndGlyphs" >9575m</text>
<line x1="56.0" y1="529.5" x2="61.5" y2="529.5" stroke="#fff" stroke-width="1" />
<text x="53" y="534.1" font-size="14" fill="#fff" text-anchor="end" font-weight="normal" textLength="21.0" lengthAdjust="spacingAndGlyphs" >400</text>
<line x1="661.5" y1="529.5" x2="667.0" y2="529.5" stroke="#fff" stroke-width="1" />
<text x="670.3" y="534.1" font-size="14" fill="#fff" text-anchor="start" font-weight="normal" textLength="38.6" lengthAdjust="spacingAndGlyphs" >7522m</text>
<line x1="56.0" y1="586.5" x2="61.5" y2="586.5" stroke="#fff" stroke-width="1" />
<text x="53" y="591.1" font-size="14" fill="#fff" text-anchor="end" font-weight="normal" textLength="21.0" lengthAdjust="spacingAndGlyphs" >500</text>
<line x1="661.5" y1="586.5" x2="667.0" y2="586.5" stroke="#fff" stroke-width="1" />
<text x="670.3" y="591.1" font-size="14" fill="#fff" text-anchor="start" font-weight="normal" textLength="38.6" lengthAdjust="spacingAndGlyphs" >5838m</text>
<line x1="56.0" y1="630.5" x2="61.5" y2="630.5" stroke="#fff" stroke-width="1" />
<text x="53" y="635.1" font-size="14" fill="#fff" text-anchor="end" font-weight="normal" textLength="21.0" lengthAdjust="spacingAndGlyphs" >600</text>
<line x1="661.5" y1="630.5" x2="667.0" y2="630.5" stroke="#fff" stroke-width="1" />
<text x="670.3" y="635.1" font-size="14" fill="#fff" text-anchor="start" font-weight="normal" textLength="38.6" lengthAdjust="spacingAndGlyphs" >4407m</text>
<line x1="56.0" y1="665.5" x2="61.5" y2="665.5" stroke="#fff" stroke-width="1" />
<text x="53" y="670.1" font-size="14" fill="#fff" text-anchor="end" font-weight="normal" textLength="21.0" lengthAdjust="spacingAndGlyphs" >700</text>
<line x1="661.5" y1="665.5" x2="667.0" y2="665.5" stroke="#fff" stroke-width="1" />
<text x="670.3" y="670.1" font-size="14" fill="#fff" text-anchor="start" font-weight="normal" textLength="38.6" lengthAdjust="spacingAndGlyphs" >3161m</text>
<line x1="56.0" y1="694.5" x2="61.5" y2="694.5" stroke="#fff" stroke-width="1" />
<text x="53" y="699.1" font-size="14" fill="#fff" text-anchor="end" font-weight="normal" textLength="21.0" lengthAdjust="spacingAndGlyphs" >800</text>
<line x1="661.5" y1="694.5" x2="667.0" y2="694.5" stroke="#fff" stroke-width="1" />
<text x="670.3" y="699.1" font-size="14" fill="#fff" text-anchor="start" font-weight="normal" textLength="38.6" lengthAdjust="spacingAndGlyphs" >2048m</text>
<line x1="56.0" y1="719.5" x2="61.5" y2="719.5" stroke="#fff" stroke-width="1" />
<text x="53" y="724.1" font-size="14" fill="#fff" text-anchor="end" font-weight="normal" textLength="21.0" lengthAdjust="spacingAndGlyphs" >900</text>
<line x1="661.5" y1="719.5" x2="667.0" y2="719.5" stroke="#fff" stroke-width="1" />
<text x="670.3" y="724.1" font-size="14" fill="#fff" text-anchor="start" font-weight="normal" textLength="38.6" lengthAdjust="spacingAndGlyphs" >1038m</text>
<line x1="56.0" y1="740.5" x2="61.5" y2="740.5" stroke="#fff" stroke-width="1" />
<text x="53" y="745.1" font-size="14" fill="#fff" text-anchor="end" font-weight="normal" textLength="28.0" lengthAdjust="spacingAndGlyphs" >1000</text>
<g clip-path="url(#cp)">
<polygon points="486.3,683.5 489.7,687.4 491.5,690.4 497.3,693.9 502.0,697.4 507.3,705.6 513.7,715.0 519.5,722.5 537.1,732.5 513.7,719.7 502.0,710.3 492.6,703.2 485.0,698.0 484.2,690.0" fill="#c00000"/>
<line x1="61.5" y1="698.5" x2="626.0" y2="698.5" stroke="#ff00ff" stroke-width="1" />
<path d="M623.0,120.5h5M625.5,118.0v5M610.0,134.5h5M612.5,132.0v5M591.0,162.5h5M593.5,160.0v5M572.0,177.5h5M574.5,175.0v5M550.0,194.5h5M552.5,192.0v5M530.0,217.5h5M532.5,215.0v5M526.0,226.5h5M528.5,224.0v5M515.0,229.5h5M517.5,227.0v5M500.0,238.5h5M502.5,236.0v5M476.0,242.5h5M478.5,240.0v5M448.0,260.5h5M450.5,258.0v5M428.0,274.5h5M430.5,272.0v5M421.0,287.5h5M423.5,285.0v5M417.0,304.5h5M419.5,302.0v5M413.0,321.5h5M415.5,319.0v5M412.0,332.5h5M414.5,330.0v5M409.0,367.5h5M411.5,365.0v5M412.0,395.5h5M414.5,393.0v5M419.0,430.5h5M421.5,428.0v5M420.0,449.5h5M422.5,447.0v5M429.0,474.5h5M431.5,472.0v5M430.0,477.5h5M432.5,475.0v5M434.0,491.5h5M436.5,489.0v5M441.0,511.5h5M443.5,509.0v5M441.0,519.5h5M443.5,517.0v5M441.0,527.5h5M443.5,525.0v5M441.0,551.5h5M443.5,549.0v5M443.0,557.5h5M445.5,555.0v5M452.0,573.5h5M454.5,571.0v5M452.0,585.5h5M454.5,583.0v5M451.0,592.5h5M453.5,590.0v5M454.0,598.5h5M456.5,596.0v5M461.0,610.5h5M463.5,608.0v5M464.0,615.5h5M466.5,613.0v5M466.0,620.5h5M468.5,618.0v5M463.0,633.5h5M465.5,631.0v5M467.0,645.5h5M469.5,643.0v5M463.0,650.5h5M465.5,648.0v5M460.0,656.5h5M462.5,654.0v5M462.0,661.5h5M464.5,659.0v5M467.0,664.5h5M469.5,662.0v5M481.0,679.5h5M483.5,677.0v5M484.0,685.5h5M486.5,683.0v5M496.0,702.5h5M498.5,700.0v5M502.0,707.5h5M504.5,705.0v5M517.0,724.5h5M519.5,722.0v5M535.0,732.5h5M537.5,730.0v5M458.0,120.5h5M460.5,118.0v5M448.0,134.5h5M450.5,132.0v5M423.0,162.5h5M425.5,160.0v5M408.0,177.5h5M410.5,175.0v5M399.0,194.5h5M401.5,192.0v5M384.0,217.5h5M386.5,215.0v5M367.0,226.5h5M369.5,224.0v5M376.0,229.5h5M378.5,227.0v5M370.0,238.5h5M372.5,236.0v5M390.0,242.5h5M392.5,240.0v5M409.0,260.5h5M411.5,258.0v5M404.0,274.5h5M406.5,272.0v5M398.0,287.5h5M400.5,285.0v5M400.0,304.5h5M402.5,302.0v5M389.0,321.5h5M391.5,319.0v5M387.0,332.5h5M389.5,330.0v5M360.0,367.5h5M362.5,365.0v5M342.0,395.5h5M344.5,393.0v5M308.0,430.5h5M310.5,428.0v5M314.0,449.5h5M316.5,447.0v5M297.0,474.5h5M299.5,472.0v5M308.0,477.5h5M310.5,475.0v5M323.0,491.5h5M325.5,489.0v5M328.0,511.5h5M330.5,509.0v5M343.0,512.5h5M345.5,510.0v5M373.0,519.5h5M375.5,517.0v5M397.0,527.5h5M399.5,525.0v5M408.0,551.5h5M410.5,549.0v5M403.0,557.5h5M405.5,555.0v5M370.0,573.5h5M372.5,571.0v5M413.0,585.5h5M415.5,583.0v5M422.0,592.5h5M424.5,590.0v5M419.0,598.5h5M421.5,596.0v5M416.0,610.5h5M418.5,608.0v5M408.0,615.5h5M410.5,613.0v5M437.0,633.5h5M439.5,631.0v5M413.0,645.5h5M415.5,643.0v5M446.0,650.5h5M448.5,648.0v5M438.0,655.5h5M440.5,653.0v5M445.0,659.5h5M447.5,657.0v5M449.0,662.5h5M451.5,660.0v5M436.0,685.5h5M438.5,683.0v5M439.0,699.5h5M441.5,697.0v5M445.0,702.5h5M447.5,700.0v5M445.0,707.5h5M447.5,705.0v5M464.0,724.5h5M466.5,722.0v5M469.0,732.5h5M471.5,730.0v5M125.0,120.5h5M127.5,118.0v5M137.0,134.5h5M139.5,132.0v5M119.0,162.5h5M121.5,160.0v5M119.0,177.5h5M121.5,175.0v5M125.0,194.5h5M127.5,192.0v5M155.0,217.5h5M157.5,215.0v5M161.0,227.5h5M163.5,225.0v5M203.0,238.5h5M205.5,236.0v5M197.0,242.5h5M199.5,240.0v5M275.0,260.5h5M277.5,258.0v5M269.0,274.5h5M271.5,272.0v5M287.0,287.5h5M289.5,285.0v5M257.0,304.5h5M259.5,302.0v5M197.0,321.5h5M199.5,319.0v5M185.0,332.5h5M187.5,330.0v5M203.0,367.5h5M205.5,365.0v5M179.0,395.5h5M181.5,393.0v5M179.0,430.5h5M181.5,428.0v5M161.0,449.5h5M163.5,447.0v5M167.0,474.5h5M169.5,472.0v5M161.0,477.5h5M163.5,475.0v5M137.0,491.5h5M139.5,489.0v5M161.0,509.5h5M163.5,507.0v5M167.0,511.5h5M169.5,509.0v5M161.0,519.5h5M163.5,517.0v5M161.0,527.5h5M163.5,525.0v5M167.0,551.5h5M169.5,549.0v5M161.0,551.5h5M163.5,549.0v5M137.0,556.5h5M139.5,554.0v5M137.0,573.5h5M139.5,571.0v5M119.0,585.5h5M121.5,583.0v5M119.0,592.5h5M121.5,590.0v5M155.0,598.5h5M157.5,596.0v5M143.0,610.5h5M145.5,608.0v5M137.0,615.5h5M139.5,613.0v5M119.0,618.5h5M121.5,616.0v5M84.0,633.5h5M86.5,631.0v5M131.0,645.5h5M133.5,643.0v5M125.0,650.5h5M127.5,648.0v5M131.0,650.5h5M133.5,648.0v5M125.0,656.5h5M127.5,654.0v5M137.0,659.5h5M139.5,657.0v5M125.0,662.5h5M127.5,660.0v5M113.0,665.5h5M115.5,663.0v5M119.0,685.5h5M121.5,683.0v5M119.0,698.5h5M121.5,696.0v5M107.0,702.5h5M109.5,700.0v5M95.0,706.5h5M97.5,704.0v5M71.0,724.5h5M73.5,722.0v5M77.0,732.5h5M79.5,730.0v5M103.0,120.5h5M105.5,118.0v5M130.0,134.5h5M132.5,132.0v5M125.0,162.5h5M127.5,160.0v5M111.0,177.5h5M113.5,175.0v5M121.0,194.5h5M123.5,192.0v5M122.0,217.5h5M124.5,215.0v5M136.0,226.5h5M138.5,224.0v5M141.0,229.5h5M143.5,227.0v5M178.0,241.5h5M180.5,239.0v5M275.0,260.5h5M277.5,258.0v5M269.0,274.5h5M271.5,272.0v5M283.0,287.5h5M285.5,285.0v5M254.0,304.5h5M256.5,302.0v5M185.0,321.5h5M187.5,319.0v5M170.0,331.5h5M172.5,329.0v5M171.0,367.5h5M173.5,365.0v5M149.0,395.5h5M151.5,393.0v5M133.0,430.5h5M135.5,428.0v5M114.0,449.5h5M116.5,447.0v5M121.0,474.5h5M123.5,472.0v5M117.0,477.5h5M119.5,475.0v5M95.0,491.5h5M97.5,489.0v5M115.0,509.5h5M117.5,507.0v5M121.0,511.5h5M123.5,509.0v5M130.0,519.5h5M132.5,517.0v5M125.0,527.5h5M127.5,525.0v5M121.0,551.5h5M123.5,549.0v5M115.0,551.5h5M117.5,549.0v5M106.0,557.5h5M108.5,555.0v5M113.0,573.5h5M115.5,571.0v5M112.0,585.5h5M114.5,583.0v5M107.0,586.5h5M109.5,584.0v5M82.0,592.5h5M84.5,590.0v5M110.0,598.5h5M112.5,596.0v5M61.0,621.5h5M63.5,619.0v5M83.0,633.5h5M85.5,631.0v5M91.0,645.5h5M93.5,643.0v5M86.0,650.5h5M88.5,648.0v5M88.0,656.5h5M90.5,654.0v5M100.0,659.5h5M102.5,657.0v5M91.0,662.5h5M93.5,660.0v5M88.0,665.5h5M90.5,663.0v5M95.0,685.5h5M97.5,683.0v5M75.0,698.5h5M77.5,696.0v5M80.0,702.5h5M82.5,700.0v5M90.0,707.5h5M92.5,705.0v5M94.0,724.5h5M96.5,722.0v5M99.0,732.5h5M101.5,730.0v5M431.0,732.5h5M433.5,730.0v5M221.0,725.5h5M223.5,723.0v5M241.0,724.5h5M243.5,722.0v5M148.0,707.5h5M150.5,705.0v5M152.0,724.5h5M154.5,722.0v5M159.0,725.5h5M161.5,723.0v5M92.0,732.5h5M94.5,730.0v5M219.0,661.5h5M221.5,659.0v5M217.0,702.5h5M219.5,700.0v5M203.0,724.5h5M205.5,722.0v5M209.0,732.5h5M211.5,730.0v5M409.0,366.5h5M411.5,364.0v5M409.0,368.5h5M411.5,366.0v5M412.0,394.5h5M414.5,392.0v5M412.0,397.5h5M414.5,395.0v5M517.0,723.5h5M519.5,721.0v5M517.0,725.5h5M519.5,723.0v5M360.0,366.5h5M362.5,364.0v5M360.0,368.5h5M362.5,366.0v5M342.0,394.5h5M344.5,392.0v5M342.0,397.5h5M344.5,395.0v5M464.0,723.5h5M466.5,721.0v5M464.0,725.5h5M466.5,723.0v5M203.0,366.5h5M205.5,364.0v5M203.0,368.5h5M205.5,366.0v5M179.0,394.5h5M181.5,392.0v5M179.0,397.5h5M181.5,395.0v5M71.0,723.5h5M73.5,721.0v5M71.0,725.5h5M73.5,723.0v5M171.0,366.5h5M173.5,364.0v5M171.0,368.5h5M173.5,366.0v5M149.0,394.5h5M151.5,392.0v5M149.0,397.5h5M151.5,395.0v5M94.0,723.5h5M96.5,721.0v5M94.0,725.5h5M96.5,723.0v5M221.0,723.5h5M223.5,721.0v5M221.0,725.5h5M223.5,723.0v5M152.0,723.5h5M154.5,721.0v5M152.0,725.5h5M154.5,723.0v5M159.0,723.5h5M161.5,721.0v5M159.0,725.5h5M161.5,723.0v5M203.0,723.5h5M205.5,721.0v5M203.0,725.5h5M205.5,723.0v5M528.0,50.5h5M530.5,48.0v5M95.0,50.5h5M97.5,48.0v5M109.0,50.5h5M111.5,48.0v5" stroke="#fff" stroke-width="1" fill="none"/>
<polyline points="433.8,732.5 223.4,725.1 243.1,724.0 61.6,707.6" fill="none" stroke="#ffff00" stroke-width="0.99" />
<polyline points="61.6,702.7 150.2,707.3 154.6,724.6 161.9,725.1 94.5,732.5" fill="none" stroke="#c86400" stroke-width="0.99" />
<polyline points="221.0,659.6 220.4,662.0 216.7,664.5 216.7,675.8 217.9,676.6 217.5,683.4 222.3,697.9 219.5,702.5 213.6,708.4 205.8,724.8 211.7,732.5" fill="none" stroke="#c8c800" stroke-width="0.99" />
<polyline points="479.3,50.5 467.3,82.7 459.8,120.3 452.3,155.4 448.5,185.5 444.8,215.5 441.7,238.0 440.5,263.0 440.5,300.6 441.7,320.7 444.8,350.8 449.8,388.4 455.3,418.5 461.8,451.0 466.2,476.0 472.3,501.0 478.6,538.6 483.1,586.3 486.1,626.3 487.7,640.0 488.5,651.7 489.7,669.3 490.3,683.3 490.9,686.9 502.0,697.4 513.7,706.2 552.4,732.5" fill="none" stroke="#ffa0ff" stroke-width="0.99" />
<polyline points="469.0,50.5 462.3,75.2 456.0,100.2 449.8,120.3 443.5,140.4 439.7,160.4 434.7,190.5 431.0,218.0 429.7,238.0 427.7,263.0 428.0,290.0 428.5,320.7 430.2,348.0 436.0,388.0 442.2,423.5 449.8,451.0 454.0,476.0 462.3,511.0 469.8,551.2 474.8,586.3 478.6,621.3 480.9,640.0 482.1,657.6 483.3,675.1 484.4,689.2 485.4,698.3 492.6,703.2 502.0,710.3 513.7,719.7 537.1,732.5" fill="none" stroke="#ff00ff" stroke-width="0.99" />
<polyline points="485.4,698.3 465.7,732.5" fill="none" stroke="#ff00ff" stroke-width="0.99" />
<polyline points="97.5,50.5 127.5,120.5 139.5,134.0 121.5,162.5 121.5,177.5 127.5,194.0 157.5,217.0 163.5,227.0 205.5,238.5 199.5,242.5 277.5,260.0 271.5,274.5 289.5,287.5 259.5,304.0 199.5,321.0 187.5,332.5 205.5,367.5 181.5,395.5 181.5,430.0 163.5,449.5 169.5,474.5 163.5,477.2 139.5,491.5 163.5,509.8 169.5,511.8 163.5,519.1 163.5,527.9 169.5,551.2 163.5,551.9 139.5,556.9 139.5,573.7 121.5,585.5 121.5,592.0 157.5,598.5 145.5,610.8 139.5,615.3 121.5,618.6 86.5,633.0 133.5,645.6 127.5,650.0 133.5,650.8 127.5,656.6 139.5,659.5 127.5,662.5 115.5,665.4 121.5,685.2 121.5,698.7 109.5,702.5 97.5,706.5 73.5,724.7 79.5,732.5" fill="none" stroke="#00ff00" stroke-width="0.99" />
<polyline points="111.0,50.5 107.5,80.0 105.0,120.5 132.5,134.0 127.0,162.5 113.5,177.5 123.5,194.0 124.5,217.5 138.5,226.5 143.0,229.0 180.0,241.0 277.5,260.0 271.0,274.5 285.0,287.5 256.5,304.0 187.5,321.0 172.5,331.5 173.5,367.5 151.5,395.5 135.0,430.0 116.0,449.5 123.5,474.5 119.8,477.2 97.7,491.5 117.8,509.8 123.5,511.8 132.0,519.8 127.3,527.9 123.5,551.2 117.8,551.9 108.2,557.4 115.3,573.7 114.0,585.5 109.5,586.3 84.4,592.0 112.8,598.5 63.0,621.2 85.7,633.2 93.0,645.6 88.0,650.5 90.1,656.6 102.6,659.5 93.8,662.0 90.6,665.4 97.0,685.5 77.3,698.3 82.1,702.5 92.5,707.6 96.4,724.7 101.6,732.5" fill="none" stroke="#ff0080" stroke-width="0.99" />
<polyline points="530.0,50.5 460.5,120.5 450.5,134.0 425.5,162.5 410.0,177.5 401.0,194.0 386.0,217.0 369.0,226.5 378.5,229.5 372.0,238.5 392.5,242.5 411.0,260.0 406.0,274.5 400.0,287.5 402.0,304.0 391.0,321.0 389.0,332.5 362.0,367.5 344.0,395.5 310.0,430.0 316.0,449.5 299.5,474.5 310.7,477.2 325.8,491.5 330.8,511.0 345.8,512.8 375.8,519.1 399.6,527.9 410.2,551.9 405.9,557.4 372.1,573.7 415.9,585.5 424.2,592.0 421.7,598.5 418.4,610.8 410.9,615.3 439.7,633.1 415.2,645.6 448.7,650.0 440.5,655.8 447.5,659.3 451.6,662.8 438.7,685.1 441.7,699.0 447.5,702.5 447.5,707.6 466.9,724.7 471.5,732.5" fill="none" stroke="#00ffff" stroke-width="0.99" />
<polyline points="704.0,50.5 661.5,89.0 625.5,120.5 612.0,134.0 593.5,162.5 574.5,177.5 552.5,194.0 532.5,217.0 528.5,226.5 517.5,229.5 502.5,238.5 478.5,242.5 450.5,260.0 430.0,274.5 423.5,287.5 419.0,304.0 415.0,321.0 414.0,332.5 411.5,367.5 414.0,395.5 421.0,430.0 422.5,449.5 431.0,474.5 432.2,477.2 436.0,491.5 443.5,511.0 443.5,519.1 443.5,527.9 443.5,551.9 445.2,557.4 454.0,573.7 454.0,585.5 453.5,592.0 456.0,598.5 463.5,610.8 466.5,615.3 468.0,620.8 465.5,633.1 469.8,645.5 465.0,650.0 462.2,656.2 464.5,661.0 469.8,664.6 483.3,679.2 486.8,685.5 498.5,702.7 504.3,707.4 519.0,724.9 537.1,732.5" fill="none" stroke="#ff0000" stroke-width="0.99" />
</g>
<rect x="219.0" y="653.0" width="7" height="7" fill="#c8c800"/>
<text x="222.5" y="659.5" font-size="8" fill="#000" text-anchor="middle" font-weight="bold" >3</text>
<rect x="214.0" y="680.0" width="7" height="7" fill="#c8c800"/>
<text x="217.5" y="686.5" font-size="8" fill="#000" text-anchor="middle" font-weight="bold" >2</text>
<rect x="210.0" y="705.0" width="7" height="7" fill="#c8c800"/>
<text x="213.5" y="711.5" font-size="8" fill="#000" text-anchor="middle" font-weight="bold" >1</text>
<rect x="67.5" y="607.5" width="43.0" height="17.0" fill="#000" stroke="#ffff00"/>
<text x="72" y="620.7" font-size="14" fill="#ffff00" text-anchor="start" font-weight="normal" textLength="35" lengthAdjust="spacingAndGlyphs" >CAPE</text>
<rect x="67.5" y="636.5" width="57.0" height="17.0" fill="#000" stroke="#c86400"/>
<text x="72" y="649.7" font-size="14" fill="#c86400" text-anchor="start" font-weight="normal" textLength="48.5" lengthAdjust="spacingAndGlyphs" >CINH * 5</text>
<rect x="625.5" y="689.5" width="30.0" height="17.0" fill="#000" stroke="#ff00ff"/>
<text x="630" y="702.7" font-size="14" fill="#ff00ff" text-anchor="start" font-weight="normal" textLength="22" lengthAdjust="spacingAndGlyphs" >LCL</text>
<line x1="61.5" y1="749.5" x2="61.5" y2="754.5" stroke="#fff" stroke-width="1" />
<text x="58.8" y="767.6" font-size="13" fill="#fff" text-anchor="middle" font-weight="normal" textLength="18.1" lengthAdjust="spacingAndGlyphs" >-50</text>
<line x1="121.5" y1="749.5" x2="121.5" y2="754.5" stroke="#fff" stroke-width="1" />
<text x="118.8" y="767.6" font-size="13" fill="#fff" text-anchor="middle" font-weight="normal" textLength="18.1" lengthAdjust="spacingAndGlyphs" >-40</text>
<line x1="181.5" y1="749.5" x2="181.5" y2="754.5" stroke="#fff" stroke-width="1" />
<text x="178.8" y="767.6" font-size="13" fill="#fff" text-anchor="middle" font-weight="normal" textLength="18.1" lengthAdjust="spacingAndGlyphs" >-30</text>
<line x1="241.5" y1="749.5" x2="241.5" y2="754.5" stroke="#fff" stroke-width="1" />
<text x="238.8" y="767.6" font-size="13" fill="#fff" text-anchor="middle" font-weight="normal" textLength="18.1" lengthAdjust="spacingAndGlyphs" >-20</text>
<line x1="301.5" y1="749.5" x2="301.5" y2="754.5" stroke="#fff" stroke-width="1" />
<text x="298.8" y="767.6" font-size="13" fill="#fff" text-anchor="middle" font-weight="normal" textLength="18.1" lengthAdjust="spacingAndGlyphs" >-10</text>
<line x1="361.5" y1="749.5" x2="361.5" y2="754.5" stroke="#fff" stroke-width="1" />
<text x="361.5" y="767.6" font-size="13" fill="#fff" text-anchor="middle" font-weight="normal" textLength="7.0" lengthAdjust="spacingAndGlyphs" >0</text>
<line x1="421.5" y1="749.5" x2="421.5" y2="754.5" stroke="#fff" stroke-width="1" />
<text x="421.5" y="767.6" font-size="13" fill="#fff" text-anchor="middle" font-weight="normal" textLength="13.9" lengthAdjust="spacingAndGlyphs" >10</text>
<line x1="481.5" y1="749.5" x2="481.5" y2="754.5" stroke="#fff" stroke-width="1" />
<text x="481.5" y="767.6" font-size="13" fill="#fff" text-anchor="middle" font-weight="normal" textLength="13.9" lengthAdjust="spacingAndGlyphs" >20</text>
<line x1="541.5" y1="749.5" x2="541.5" y2="754.5" stroke="#fff" stroke-width="1" />
<text x="541.5" y="767.6" font-size="13" fill="#fff" text-anchor="middle" font-weight="normal" textLength="13.9" lengthAdjust="spacingAndGlyphs" >30</text>
<line x1="601.5" y1="749.5" x2="601.5" y2="754.5" stroke="#fff" stroke-width="1" />
<text x="601.5" y="767.6" font-size="13" fill="#fff" text-anchor="middle" font-weight="normal" textLength="13.9" lengthAdjust="spacingAndGlyphs" >40</text>
<line x1="661.5" y1="749.5" x2="661.5" y2="754.5" stroke="#fff" stroke-width="1" />
<text x="661.5" y="767.6" font-size="13" fill="#fff" text-anchor="middle" font-weight="normal" textLength="13.9" lengthAdjust="spacingAndGlyphs" >50</text>
<text x="361.5" y="781" font-size="13.5" fill="#fff" text-anchor="middle" font-weight="normal" textLength="172.7" lengthAdjust="spacingAndGlyphs" >Temperature, Dewpoint  [ °C ]</text>
<line x1="61.5" y1="788.0" x2="61.5" y2="792.0" stroke="#fff" stroke-width="1" />
<text x="61.5" y="805.6" font-size="13" fill="#fff" text-anchor="middle" font-weight="normal" textLength="7.0" lengthAdjust="spacingAndGlyphs" >0</text>
<line x1="121.5" y1="788.0" x2="121.5" y2="792.0" stroke="#fff" stroke-width="1" />
<text x="121.5" y="805.6" font-size="13" fill="#fff" text-anchor="middle" font-weight="normal" textLength="13.9" lengthAdjust="spacingAndGlyphs" >10</text>
<line x1="181.5" y1="788.0" x2="181.5" y2="792.0" stroke="#fff" stroke-width="1" />
<text x="181.5" y="805.6" font-size="13" fill="#fff" text-anchor="middle" font-weight="normal" textLength="13.9" lengthAdjust="spacingAndGlyphs" >20</text>
<line x1="241.5" y1="788.0" x2="241.5" y2="792.0" stroke="#fff" stroke-width="1" />
<text x="241.5" y="805.6" font-size="13" fill="#fff" text-anchor="middle" font-weight="normal" textLength="13.9" lengthAdjust="spacingAndGlyphs" >30</text>
<line x1="301.5" y1="788.0" x2="301.5" y2="792.0" stroke="#fff" stroke-width="1" />
<text x="301.5" y="805.6" font-size="13" fill="#fff" text-anchor="middle" font-weight="normal" textLength="13.9" lengthAdjust="spacingAndGlyphs" >40</text>
<line x1="361.5" y1="788.0" x2="361.5" y2="792.0" stroke="#fff" stroke-width="1" />
<text x="361.5" y="805.6" font-size="13" fill="#fff" text-anchor="middle" font-weight="normal" textLength="13.9" lengthAdjust="spacingAndGlyphs" >50</text>
<line x1="421.5" y1="788.0" x2="421.5" y2="792.0" stroke="#fff" stroke-width="1" />
<text x="421.5" y="805.6" font-size="13" fill="#fff" text-anchor="middle" font-weight="normal" textLength="13.9" lengthAdjust="spacingAndGlyphs" >60</text>
<line x1="481.5" y1="788.0" x2="481.5" y2="792.0" stroke="#fff" stroke-width="1" />
<text x="481.5" y="805.6" font-size="13" fill="#fff" text-anchor="middle" font-weight="normal" textLength="13.9" lengthAdjust="spacingAndGlyphs" >70</text>
<line x1="541.5" y1="788.0" x2="541.5" y2="792.0" stroke="#fff" stroke-width="1" />
<text x="541.5" y="805.6" font-size="13" fill="#fff" text-anchor="middle" font-weight="normal" textLength="13.9" lengthAdjust="spacingAndGlyphs" >80</text>
<line x1="601.5" y1="788.0" x2="601.5" y2="792.0" stroke="#fff" stroke-width="1" />
<text x="601.5" y="805.6" font-size="13" fill="#fff" text-anchor="middle" font-weight="normal" textLength="13.9" lengthAdjust="spacingAndGlyphs" >90</text>
<line x1="661.5" y1="788.0" x2="661.5" y2="792.0" stroke="#fff" stroke-width="1" />
<text x="661.5" y="805.6" font-size="13" fill="#fff" text-anchor="middle" font-weight="normal" textLength="20.9" lengthAdjust="spacingAndGlyphs" >100</text>
<text x="361.5" y="819" font-size="13.5" fill="#fff" text-anchor="middle" font-weight="normal" textLength="107" lengthAdjust="spacingAndGlyphs" >Windspeed  [ knt ]</text>
<line x1="61.5" y1="826.0" x2="61.5" y2="830.0" stroke="#fff" stroke-width="1" />
<text x="61.5" y="842.6" font-size="13" fill="#fff" text-anchor="middle" font-weight="normal" textLength="7.0" lengthAdjust="spacingAndGlyphs" >0</text>
<line x1="121.5" y1="826.0" x2="121.5" y2="830.0" stroke="#fff" stroke-width="1" />
<text x="121.5" y="842.6" font-size="13" fill="#fff" text-anchor="middle" font-weight="normal" textLength="20.9" lengthAdjust="spacingAndGlyphs" >300</text>
<line x1="181.5" y1="826.0" x2="181.5" y2="830.0" stroke="#fff" stroke-width="1" />
<text x="181.5" y="842.6" font-size="13" fill="#fff" text-anchor="middle" font-weight="normal" textLength="20.9" lengthAdjust="spacingAndGlyphs" >600</text>
<line x1="241.5" y1="826.0" x2="241.5" y2="830.0" stroke="#fff" stroke-width="1" />
<text x="241.5" y="842.6" font-size="13" fill="#fff" text-anchor="middle" font-weight="normal" textLength="20.9" lengthAdjust="spacingAndGlyphs" >900</text>
<line x1="301.5" y1="826.0" x2="301.5" y2="830.0" stroke="#fff" stroke-width="1" />
<text x="301.5" y="842.6" font-size="13" fill="#fff" text-anchor="middle" font-weight="normal" textLength="27.8" lengthAdjust="spacingAndGlyphs" >1200</text>
<line x1="361.5" y1="826.0" x2="361.5" y2="830.0" stroke="#fff" stroke-width="1" />
<text x="361.5" y="842.6" font-size="13" fill="#fff" text-anchor="middle" font-weight="normal" textLength="27.8" lengthAdjust="spacingAndGlyphs" >1500</text>
<line x1="421.5" y1="826.0" x2="421.5" y2="830.0" stroke="#fff" stroke-width="1" />
<text x="421.5" y="842.6" font-size="13" fill="#fff" text-anchor="middle" font-weight="normal" textLength="27.8" lengthAdjust="spacingAndGlyphs" >1800</text>
<line x1="481.5" y1="826.0" x2="481.5" y2="830.0" stroke="#fff" stroke-width="1" />
<text x="481.5" y="842.6" font-size="13" fill="#fff" text-anchor="middle" font-weight="normal" textLength="27.8" lengthAdjust="spacingAndGlyphs" >2100</text>
<line x1="541.5" y1="826.0" x2="541.5" y2="830.0" stroke="#fff" stroke-width="1" />
<text x="541.5" y="842.6" font-size="13" fill="#fff" text-anchor="middle" font-weight="normal" textLength="27.8" lengthAdjust="spacingAndGlyphs" >2400</text>
<line x1="601.5" y1="826.0" x2="601.5" y2="830.0" stroke="#fff" stroke-width="1" />
<text x="601.5" y="842.6" font-size="13" fill="#fff" text-anchor="middle" font-weight="normal" textLength="27.8" lengthAdjust="spacingAndGlyphs" >2700</text>
<line x1="661.5" y1="826.0" x2="661.5" y2="830.0" stroke="#fff" stroke-width="1" />
<text x="661.5" y="842.6" font-size="13" fill="#fff" text-anchor="middle" font-weight="normal" textLength="27.8" lengthAdjust="spacingAndGlyphs" >3000</text>
<text x="361.5" y="856.8" font-size="13.5" fill="#fff" text-anchor="middle" font-weight="normal" textLength="137.4" lengthAdjust="spacingAndGlyphs" >CAPE, CINH * 5  [ J/kg ]</text>
<line x1="61.5" y1="863.0" x2="61.5" y2="867.0" stroke="#fff" stroke-width="1" />
<text x="58.8" y="879.6" font-size="13" fill="#fff" text-anchor="middle" font-weight="normal" textLength="25.1" lengthAdjust="spacingAndGlyphs" >-100</text>
<line x1="136.5" y1="863.0" x2="136.5" y2="867.0" stroke="#fff" stroke-width="1" />
<text x="133.8" y="879.6" font-size="13" fill="#fff" text-anchor="middle" font-weight="normal" textLength="18.1" lengthAdjust="spacingAndGlyphs" >-50</text>
<line x1="211.5" y1="863.0" x2="211.5" y2="867.0" stroke="#fff" stroke-width="1" />
<text x="211.5" y="879.6" font-size="13" fill="#fff" text-anchor="middle" font-weight="normal" textLength="7.0" lengthAdjust="spacingAndGlyphs" >0</text>
<line x1="286.5" y1="863.0" x2="286.5" y2="867.0" stroke="#fff" stroke-width="1" />
<text x="286.5" y="879.6" font-size="13" fill="#fff" text-anchor="middle" font-weight="normal" textLength="13.9" lengthAdjust="spacingAndGlyphs" >50</text>
<line x1="361.5" y1="863.0" x2="361.5" y2="867.0" stroke="#fff" stroke-width="1" />
<text x="361.5" y="879.6" font-size="13" fill="#fff" text-anchor="middle" font-weight="normal" textLength="20.9" lengthAdjust="spacingAndGlyphs" >100</text>
<line x1="436.5" y1="863.0" x2="436.5" y2="867.0" stroke="#fff" stroke-width="1" />
<text x="436.5" y="879.6" font-size="13" fill="#fff" text-anchor="middle" font-weight="normal" textLength="20.9" lengthAdjust="spacingAndGlyphs" >150</text>
<line x1="511.5" y1="863.0" x2="511.5" y2="867.0" stroke="#fff" stroke-width="1" />
<text x="511.5" y="879.6" font-size="13" fill="#fff" text-anchor="middle" font-weight="normal" textLength="20.9" lengthAdjust="spacingAndGlyphs" >200</text>
<line x1="586.5" y1="863.0" x2="586.5" y2="867.0" stroke="#fff" stroke-width="1" />
<text x="586.5" y="879.6" font-size="13" fill="#fff" text-anchor="middle" font-weight="normal" textLength="20.9" lengthAdjust="spacingAndGlyphs" >250</text>
<line x1="661.5" y1="863.0" x2="661.5" y2="867.0" stroke="#fff" stroke-width="1" />
<text x="661.5" y="879.6" font-size="13" fill="#fff" text-anchor="middle" font-weight="normal" textLength="20.9" lengthAdjust="spacingAndGlyphs" >300</text>
<text x="361.5" y="893" font-size="13.5" fill="#fff" text-anchor="middle" font-weight="normal" textLength="204.2" lengthAdjust="spacingAndGlyphs" >Storm Relative Helicity  [ m^2/s^2 ]</text>
<text x="761" y="32" font-size="14" fill="#00ff00" text-anchor="middle" font-weight="bold" textLength="28.3" lengthAdjust="spacingAndGlyphs" >OBS</text>
<text x="826.8" y="32" font-size="14" fill="#ff0080" text-anchor="middle" font-weight="bold" textLength="17.3" lengthAdjust="spacingAndGlyphs" >SR</text>
<line x1="761.5" y1="40.0" x2="761.5" y2="770.0" stroke="#00ff00" stroke-width="1" />
<line x1="826.5" y1="40.0" x2="826.5" y2="770.0" stroke="#ff0080" stroke-width="1" />
<g>
<line x1="761.5" y1="120.5" x2="754.2" y2="149.0" stroke="#fff" stroke-width="0.99" />
<line x1="761.5" y1="134.0" x2="766.6" y2="163.6" stroke="#fff" stroke-width="0.99" />
<line x1="761.5" y1="162.5" x2="771.6" y2="190.1" stroke="#fff" stroke-width="0.99" />
<line x1="761.5" y1="177.5" x2="762.4" y2="207.5" stroke="#fff" stroke-width="0.99" />
<line x1="761.5" y1="194.0" x2="766.6" y2="223.6" stroke="#fff" stroke-width="0.99" />
<line x1="761.5" y1="217.0" x2="750.2" y2="245.0" stroke="#fff" stroke-width="0.99" />
<line x1="761.5" y1="226.5" x2="756.2" y2="256.0" stroke="#fff" stroke-width="0.99" />
<line x1="761.5" y1="229.5" x2="758.5" y2="259.3" stroke="#fff" stroke-width="0.99" />
<line x1="761.5" y1="238.5" x2="756.2" y2="268.0" stroke="#fff" stroke-width="0.99" />
<line x1="761.5" y1="242.5" x2="760.5" y2="272.5" stroke="#fff" stroke-width="0.99" />
<line x1="761.5" y1="260.0" x2="775.7" y2="286.0" stroke="#fff" stroke-width="0.99" />
<line x1="761.5" y1="274.5" x2="774.8" y2="301.1" stroke="#fff" stroke-width="0.99" />
<line x1="761.5" y1="287.5" x2="773.5" y2="314.8" stroke="#fff" stroke-width="0.99" />
<line x1="761.5" y1="304.0" x2="774.0" y2="331.2" stroke="#fff" stroke-width="0.99" />
<line x1="761.5" y1="321.0" x2="766.5" y2="350.6" stroke="#fff" stroke-width="0.99" />
<line x1="761.5" y1="332.5" x2="764.7" y2="362.3" stroke="#fff" stroke-width="0.99" />
<line x1="761.5" y1="366.5" x2="753.3" y2="395.4" stroke="#fff" stroke-width="0.99" />
<line x1="761.5" y1="367.5" x2="753.0" y2="396.3" stroke="#fff" stroke-width="0.99" />
<line x1="761.5" y1="395.0" x2="754.2" y2="424.0" stroke="#fff" stroke-width="0.99" />
<line x1="761.5" y1="396.5" x2="753.9" y2="425.5" stroke="#fff" stroke-width="0.99" />
<line x1="761.5" y1="430.0" x2="740.1" y2="450.4" stroke="#fff" stroke-width="0.99" />
<line x1="761.5" y1="449.5" x2="739.0" y2="469.3" stroke="#fff" stroke-width="0.99" />
<line x1="761.5" y1="474.5" x2="734.0" y2="485.5" stroke="#fff" stroke-width="0.99" />
<line x1="761.5" y1="477.2" x2="734.0" y2="488.2" stroke="#fff" stroke-width="0.99" />
<line x1="761.5" y1="491.5" x2="743.7" y2="515.5" stroke="#fff" stroke-width="0.99" />
<line x1="761.5" y1="510.0" x2="740.5" y2="531.0" stroke="#fff" stroke-width="0.99" />
<line x1="761.5" y1="511.0" x2="740.5" y2="532.0" stroke="#fff" stroke-width="0.99" />
<line x1="761.5" y1="512.0" x2="740.5" y2="533.0" stroke="#fff" stroke-width="0.99" />
<line x1="761.5" y1="519.0" x2="751.5" y2="547.2" stroke="#fff" stroke-width="0.99" />
<line x1="761.5" y1="528.0" x2="748.0" y2="554.7" stroke="#fff" stroke-width="0.99" />
<line x1="761.5" y1="551.2" x2="741.1" y2="573.2" stroke="#fff" stroke-width="0.99" />
<line x1="761.5" y1="552.0" x2="741.1" y2="574.0" stroke="#fff" stroke-width="0.99" />
<line x1="761.5" y1="557.4" x2="750.5" y2="585.2" stroke="#fff" stroke-width="0.99" />
<line x1="761.5" y1="573.7" x2="754.5" y2="602.9" stroke="#fff" stroke-width="0.99" />
<line x1="761.5" y1="585.5" x2="761.5" y2="615.5" stroke="#fff" stroke-width="0.99" />
<line x1="761.5" y1="592.0" x2="744.5" y2="616.6" stroke="#fff" stroke-width="0.99" />
<line x1="761.5" y1="598.5" x2="734.7" y2="610.9" stroke="#fff" stroke-width="0.99" />
<line x1="761.5" y1="610.8" x2="737.5" y2="628.3" stroke="#fff" stroke-width="0.99" />
<line x1="761.5" y1="615.3" x2="736.0" y2="631.3" stroke="#fff" stroke-width="0.99" />
<line x1="761.5" y1="618.5" x2="736.2" y2="634.0" stroke="#fff" stroke-width="0.99" />
<line x1="761.5" y1="621.5" x2="736.9" y2="638.0" stroke="#fff" stroke-width="0.99" />
<line x1="761.5" y1="633.0" x2="739.8" y2="653.2" stroke="#fff" stroke-width="0.99" />
<line x1="761.5" y1="645.6" x2="747.5" y2="672.1" stroke="#fff" stroke-width="0.99" />
<line x1="761.5" y1="650.0" x2="748.5" y2="677.0" stroke="#fff" stroke-width="0.99" />
<line x1="761.5" y1="650.8" x2="748.5" y2="677.8" stroke="#fff" stroke-width="0.99" />
<line x1="761.5" y1="656.6" x2="749.0" y2="683.9" stroke="#fff" stroke-width="0.99" />
<line x1="761.5" y1="659.5" x2="749.5" y2="687.0" stroke="#fff" stroke-width="0.99" />
<line x1="761.5" y1="662.5" x2="750.0" y2="690.2" stroke="#fff" stroke-width="0.99" />
<line x1="761.5" y1="665.4" x2="750.0" y2="693.1" stroke="#fff" stroke-width="0.99" />
<line x1="761.5" y1="685.2" x2="751.0" y2="713.2" stroke="#fff" stroke-width="0.99" />
<line x1="761.5" y1="698.5" x2="739.7" y2="718.5" stroke="#fff" stroke-width="0.99" />
<line x1="761.5" y1="702.6" x2="747.0" y2="728.8" stroke="#fff" stroke-width="0.99" />
<line x1="761.5" y1="707.6" x2="756.5" y2="737.1" stroke="#fff" stroke-width="0.99" />
<line x1="761.5" y1="724.3" x2="738.2" y2="742.6" stroke="#fff" stroke-width="0.99" />
<line x1="761.5" y1="725.2" x2="738.2" y2="743.5" stroke="#fff" stroke-width="0.99" />
<line x1="761.5" y1="732.3" x2="762.5" y2="762.3" stroke="#fff" stroke-width="0.99" />
<line x1="826.5" y1="120.5" x2="841.9" y2="146.1" stroke="#fff" stroke-width="0.99" />
<line x1="826.5" y1="134.0" x2="847.8" y2="154.7" stroke="#fff" stroke-width="0.99" />
<line x1="826.5" y1="162.5" x2="853.1" y2="176.2" stroke="#fff" stroke-width="0.99" />
<line x1="826.5" y1="177.5" x2="849.2" y2="196.3" stroke="#fff" stroke-width="0.99" />
<line x1="826.5" y1="194.0" x2="849.9" y2="212.5" stroke="#fff" stroke-width="0.99" />
<line x1="826.5" y1="217.0" x2="828.0" y2="247.0" stroke="#fff" stroke-width="0.99" />
<line x1="826.5" y1="226.5" x2="838.0" y2="254.2" stroke="#fff" stroke-width="0.99" />
<line x1="826.5" y1="229.5" x2="837.0" y2="257.6" stroke="#fff" stroke-width="0.99" />
<line x1="826.5" y1="238.5" x2="836.8" y2="266.7" stroke="#fff" stroke-width="0.99" />
<line x1="826.5" y1="242.5" x2="831.7" y2="272.0" stroke="#fff" stroke-width="0.99" />
<line x1="826.5" y1="260.0" x2="846.3" y2="282.0" stroke="#fff" stroke-width="0.99" />
<line x1="826.5" y1="274.5" x2="845.3" y2="297.3" stroke="#fff" stroke-width="0.99" />
<line x1="826.5" y1="287.5" x2="843.1" y2="312.0" stroke="#fff" stroke-width="0.99" />
<line x1="826.5" y1="304.0" x2="844.0" y2="328.0" stroke="#fff" stroke-width="0.99" />
<line x1="826.5" y1="321.0" x2="841.1" y2="347.0" stroke="#fff" stroke-width="0.99" />
<line x1="826.5" y1="332.5" x2="840.1" y2="359.1" stroke="#fff" stroke-width="0.99" />
<line x1="826.5" y1="366.5" x2="826.5" y2="396.5" stroke="#fff" stroke-width="0.99" />
<line x1="826.5" y1="368.0" x2="826.5" y2="398.0" stroke="#fff" stroke-width="0.99" />
<line x1="826.5" y1="395.5" x2="827.0" y2="425.5" stroke="#fff" stroke-width="0.99" />
<line x1="826.5" y1="397.0" x2="829.5" y2="426.8" stroke="#fff" stroke-width="0.99" />
<line x1="826.5" y1="430.0" x2="806.1" y2="451.8" stroke="#fff" stroke-width="0.99" />
<line x1="826.5" y1="449.5" x2="806.1" y2="471.3" stroke="#fff" stroke-width="0.99" />
<line x1="826.5" y1="474.5" x2="797.5" y2="481.0" stroke="#fff" stroke-width="0.99" />
<line x1="826.5" y1="477.2" x2="797.5" y2="483.7" stroke="#fff" stroke-width="0.99" />
<line x1="826.5" y1="491.5" x2="819.6" y2="520.5" stroke="#fff" stroke-width="0.99" />
<line x1="826.5" y1="510.0" x2="808.3" y2="533.8" stroke="#fff" stroke-width="0.99" />
<line x1="826.5" y1="512.0" x2="808.3" y2="535.8" stroke="#fff" stroke-width="0.99" />
<line x1="826.5" y1="519.0" x2="830.8" y2="548.6" stroke="#fff" stroke-width="0.99" />
<line x1="826.5" y1="528.0" x2="824.5" y2="558.0" stroke="#fff" stroke-width="0.99" />
<line x1="826.5" y1="551.2" x2="809.2" y2="575.7" stroke="#fff" stroke-width="0.99" />
<line x1="826.5" y1="552.0" x2="809.2" y2="576.5" stroke="#fff" stroke-width="0.99" />
<line x1="826.5" y1="557.4" x2="833.7" y2="586.4" stroke="#fff" stroke-width="0.99" />
<line x1="826.5" y1="573.7" x2="838.8" y2="601.0" stroke="#fff" stroke-width="0.99" />
<line x1="826.5" y1="585.5" x2="850.5" y2="603.2" stroke="#fff" stroke-width="0.99" />
<line x1="826.5" y1="586.3" x2="850.5" y2="604.0" stroke="#fff" stroke-width="0.99" />
<line x1="826.5" y1="592.0" x2="832.4" y2="621.4" stroke="#fff" stroke-width="0.99" />
<line x1="826.5" y1="598.5" x2="797.7" y2="605.5" stroke="#fff" stroke-width="0.99" />
<line x1="826.5" y1="610.8" x2="804.7" y2="631.4" stroke="#fff" stroke-width="0.99" />
<line x1="826.5" y1="615.3" x2="798.3" y2="625.6" stroke="#fff" stroke-width="0.99" />
<line x1="826.5" y1="618.5" x2="801.0" y2="633.5" stroke="#fff" stroke-width="0.99" />
<line x1="826.5" y1="621.5" x2="808.0" y2="645.0" stroke="#fff" stroke-width="0.99" />
<line x1="826.5" y1="633.5" x2="853.3" y2="620.1" stroke="#fff" stroke-width="0.99" />
<line x1="826.5" y1="645.6" x2="842.4" y2="671.0" stroke="#fff" stroke-width="0.99" />
<line x1="826.5" y1="650.0" x2="840.8" y2="676.3" stroke="#fff" stroke-width="0.99" />
<line x1="826.5" y1="650.8" x2="840.0" y2="677.6" stroke="#fff" stroke-width="0.99" />
<line x1="826.5" y1="656.6" x2="830.5" y2="686.3" stroke="#fff" stroke-width="0.99" />
<line x1="826.5" y1="659.5" x2="832.5" y2="688.9" stroke="#fff" stroke-width="0.99" />
<line x1="826.5" y1="662.5" x2="843.1" y2="687.5" stroke="#fff" stroke-width="0.99" />
<line x1="826.5" y1="665.6" x2="835.5" y2="694.2" stroke="#fff" stroke-width="0.99" />
<line x1="826.5" y1="685.2" x2="842.7" y2="710.5" stroke="#fff" stroke-width="0.99" />
<line x1="826.5" y1="698.5" x2="814.0" y2="725.7" stroke="#fff" stroke-width="0.99" />
<line x1="826.5" y1="702.6" x2="847.7" y2="723.6" stroke="#fff" stroke-width="0.99" />
<line x1="826.5" y1="707.6" x2="856.3" y2="710.4" stroke="#fff" stroke-width="0.99" />
<line x1="826.5" y1="724.5" x2="851.1" y2="707.7" stroke="#fff" stroke-width="0.99" />
<line x1="826.5" y1="725.3" x2="851.1" y2="708.5" stroke="#fff" stroke-width="0.99" />
<line x1="826.5" y1="732.3" x2="855.5" y2="725.1" stroke="#fff" stroke-width="0.99" />
</g>
<text x="894" y="61.5" font-size="13" fill="#fff" text-anchor="start" font-weight="normal" textLength="141.5" lengthAdjust="spacingAndGlyphs" >Convective Temperature:</text>
<text x="1124" y="61.5" font-size="13" fill="#ff0000" text-anchor="end" font-weight="normal" textLength="31.5" lengthAdjust="spacingAndGlyphs" >30.43</text>
<text x="1230" y="61.5" font-size="13" fill="#fff" text-anchor="start" font-weight="normal" textLength="22.3" lengthAdjust="spacingAndGlyphs" >[°C]</text>
<text x="894" y="78.5" font-size="13" fill="#fff" text-anchor="start" font-weight="normal" textLength="92.8" lengthAdjust="spacingAndGlyphs" >Snowfall Height:</text>
<text x="1124" y="78.5" font-size="13" fill="#ffffff" text-anchor="end" font-weight="normal" textLength="45.5" lengthAdjust="spacingAndGlyphs" >3747.61</text>
<text x="1230" y="78.5" font-size="13" fill="#fff" text-anchor="start" font-weight="normal" textLength="19.5" lengthAdjust="spacingAndGlyphs" >[m]</text>
<text x="894" y="104" font-size="13" fill="#fff" text-anchor="start" font-weight="normal" textLength="259.6" lengthAdjust="spacingAndGlyphs" text-decoration="underline">Parcels: Using 50mB mean layer LCL + CCL</text>
<text x="894" y="123.5" font-size="13" fill="#fff" text-anchor="start" font-weight="normal" textLength="69.7" lengthAdjust="spacingAndGlyphs" >Lifted Index:</text>
<text x="1124" y="123.5" font-size="13" fill="#ff0000" text-anchor="end" font-weight="normal" textLength="28.7" lengthAdjust="spacingAndGlyphs" >-3.47</text>
<text x="1214" y="123.5" font-size="13" fill="#ff0000" text-anchor="end" font-weight="normal" textLength="28.7" lengthAdjust="spacingAndGlyphs" >-4.88</text>
<text x="1230" y="123.5" font-size="13" fill="#fff" text-anchor="start" font-weight="normal" textLength="22.3" lengthAdjust="spacingAndGlyphs" >[°C]</text>
<text x="894" y="140.5" font-size="13" fill="#fff" text-anchor="start" font-weight="normal" textLength="62.2" lengthAdjust="spacingAndGlyphs" >CAPE ML:</text>
<text x="1124" y="140.5" font-size="13" fill="#ff0000" text-anchor="end" font-weight="normal" textLength="45.5" lengthAdjust="spacingAndGlyphs" >1239.76</text>
<text x="1214" y="140.5" font-size="13" fill="#ff0000" text-anchor="end" font-weight="normal" textLength="45.5" lengthAdjust="spacingAndGlyphs" >1965.98</text>
<text x="1230" y="140.5" font-size="13" fill="#fff" text-anchor="start" font-weight="normal" textLength="32.3" lengthAdjust="spacingAndGlyphs" >[J/kg]</text>
<text x="894" y="157.5" font-size="13" fill="#fff" text-anchor="start" font-weight="normal" textLength="174.6" lengthAdjust="spacingAndGlyphs" >CINH | LSI (Inversion: 816mB):</text>
<text x="1124" y="157.5" font-size="13" fill="#ff0000" text-anchor="end" font-weight="normal" textLength="31.5" lengthAdjust="spacingAndGlyphs" >67.54</text>
<text x="1124" y="157.5" font-size="13" fill="#fff" text-anchor="start" font-weight="normal" >,</text>
<text x="1136.5" y="157.5" font-size="13" fill="#ff0000" text-anchor="start" font-weight="normal" textLength="24.5" lengthAdjust="spacingAndGlyphs" >1.28</text>
<text x="1230" y="157.5" font-size="13" fill="#fff" text-anchor="start" font-weight="normal" textLength="62.5" lengthAdjust="spacingAndGlyphs" >[J/kg], [°C]</text>
<text x="894" y="174.5" font-size="13" fill="#fff" text-anchor="start" font-weight="normal" textLength="69.7" lengthAdjust="spacingAndGlyphs" >CAPE SFC:</text>
<text x="1124" y="174.5" font-size="13" fill="#ff0000" text-anchor="end" font-weight="normal" textLength="45.5" lengthAdjust="spacingAndGlyphs" >1861.30</text>
<text x="1214" y="174.5" font-size="13" fill="#ff0000" text-anchor="end" font-weight="normal" textLength="45.5" lengthAdjust="spacingAndGlyphs" >2402.21</text>
<text x="1230" y="174.5" font-size="13" fill="#fff" text-anchor="start" font-weight="normal" textLength="32.3" lengthAdjust="spacingAndGlyphs" >[J/kg]</text>
<text x="894" y="191.5" font-size="13" fill="#fff" text-anchor="start" font-weight="normal" textLength="129" lengthAdjust="spacingAndGlyphs" >CAPE MU | CINH MU:</text>
<text x="1124" y="191.5" font-size="13" fill="#ff0000" text-anchor="end" font-weight="normal" textLength="45.5" lengthAdjust="spacingAndGlyphs" >1861.30</text>
<text x="1124" y="191.5" font-size="13" fill="#fff" text-anchor="start" font-weight="normal" >,</text>
<text x="1136.5" y="191.5" font-size="13" fill="#ff0000" text-anchor="start" font-weight="normal" textLength="31.5" lengthAdjust="spacingAndGlyphs" >33.99</text>
<text x="1230" y="191.5" font-size="13" fill="#fff" text-anchor="start" font-weight="normal" textLength="32.3" lengthAdjust="spacingAndGlyphs" >[J/kg]</text>
<text x="894" y="208.5" font-size="13" fill="#fff" text-anchor="start" font-weight="normal" textLength="160" lengthAdjust="spacingAndGlyphs" >3km SFC CAPE | IL CAPE:</text>
<text x="1124" y="208.5" font-size="13" fill="#ffff00" text-anchor="end" font-weight="normal" textLength="31.5" lengthAdjust="spacingAndGlyphs" >55.03</text>
<text x="1124" y="208.5" font-size="13" fill="#fff" text-anchor="start" font-weight="normal" >,</text>
<text x="1136.5" y="208.5" font-size="13" fill="#ff0000" text-anchor="start" font-weight="normal" textLength="38.5" lengthAdjust="spacingAndGlyphs" >872.50</text>
<text x="1230" y="208.5" font-size="13" fill="#fff" text-anchor="start" font-weight="normal" textLength="32.3" lengthAdjust="spacingAndGlyphs" >[J/kg]</text>
<text x="894" y="225.5" font-size="13" fill="#fff" text-anchor="start" font-weight="normal" textLength="142.2" lengthAdjust="spacingAndGlyphs" >DCAPE (LFS = 680mB):</text>
<text x="1124" y="225.5" font-size="13" fill="#ff0000" text-anchor="end" font-weight="normal" textLength="38.5" lengthAdjust="spacingAndGlyphs" >515.54</text>
<text x="1230" y="225.5" font-size="13" fill="#fff" text-anchor="start" font-weight="normal" textLength="32.3" lengthAdjust="spacingAndGlyphs" >[J/kg]</text>
<text x="894" y="242.5" font-size="13" fill="#fff" text-anchor="start" font-weight="normal" textLength="120.2" lengthAdjust="spacingAndGlyphs" >850-600 Lapse Rate:</text>
<text x="1124" y="242.5" font-size="13" fill="#ff0000" text-anchor="end" font-weight="normal" textLength="31.5" lengthAdjust="spacingAndGlyphs" >19.18</text>
<text x="1230" y="242.5" font-size="13" fill="#fff" text-anchor="start" font-weight="normal" textLength="22.3" lengthAdjust="spacingAndGlyphs" >[°C]</text>
<text x="894" y="259.5" font-size="13" fill="#fff" text-anchor="start" font-weight="normal" textLength="156.1" lengthAdjust="spacingAndGlyphs" >FM Hail Size | SHIP | LHP:</text>
<text x="1124" y="259.5" font-size="13" fill="#ffff00" text-anchor="end" font-weight="normal" textLength="46.2" lengthAdjust="spacingAndGlyphs" >1.9 - 2.5</text>
<text x="1124" y="259.5" font-size="13" fill="#fff" text-anchor="start" font-weight="normal" >,</text>
<text x="1136.5" y="259.5" font-size="13" fill="#00ff00" text-anchor="start" font-weight="normal" textLength="24.5" lengthAdjust="spacingAndGlyphs" >0.33</text>
<text x="1162.5" y="259.5" font-size="13" fill="#fff" text-anchor="start" font-weight="normal" >,</text>
<text x="1173.5" y="259.5" font-size="13" fill="#00ff00" text-anchor="start" font-weight="normal" textLength="24.5" lengthAdjust="spacingAndGlyphs" >0.00</text>
<text x="1230" y="259.5" font-size="13" fill="#fff" text-anchor="start" font-weight="normal" textLength="71.8" lengthAdjust="spacingAndGlyphs" >[cm], [1], [1]</text>
<text x="894" y="276.5" font-size="13" fill="#fff" text-anchor="start" font-weight="normal" textLength="147.6" lengthAdjust="spacingAndGlyphs" >Estofex Exp. Hail Param:</text>
<text x="1124" y="276.5" font-size="13" fill="#ffff00" text-anchor="end" font-weight="normal" textLength="24.5" lengthAdjust="spacingAndGlyphs" >2.36</text>
<text x="1230" y="276.5" font-size="13" fill="#fff" text-anchor="start" font-weight="normal" textLength="26.6" lengthAdjust="spacingAndGlyphs" >[cm]</text>
<text x="894" y="293.5" font-size="13" fill="#fff" text-anchor="start" font-weight="normal" textLength="172.8" lengthAdjust="spacingAndGlyphs" >Max. Hail Size (OLD, MU, IL):</text>
<text x="1124" y="293.5" font-size="13" fill="#00ff00" text-anchor="end" font-weight="normal" textLength="24.5" lengthAdjust="spacingAndGlyphs" >0.82</text>
<text x="1124" y="293.5" font-size="13" fill="#fff" text-anchor="start" font-weight="normal" >,</text>
<text x="1136.5" y="293.5" font-size="13" fill="#ffff00" text-anchor="start" font-weight="normal" textLength="24.5" lengthAdjust="spacingAndGlyphs" >2.97</text>
<text x="1162.5" y="293.5" font-size="13" fill="#fff" text-anchor="start" font-weight="normal" >,</text>
<text x="1173.5" y="293.5" font-size="13" fill="#ffff00" text-anchor="start" font-weight="normal" textLength="24.5" lengthAdjust="spacingAndGlyphs" >2.61</text>
<text x="1230" y="293.5" font-size="13" fill="#fff" text-anchor="start" font-weight="normal" textLength="26.6" lengthAdjust="spacingAndGlyphs" >[cm]</text>
<text x="894" y="313.5" font-size="13" fill="#fff" text-anchor="start" font-weight="normal" textLength="102.4" lengthAdjust="spacingAndGlyphs" >LCL / CCL (AGL):</text>
<text x="1124" y="313.5" font-size="13" fill="#ffff00" text-anchor="end" font-weight="normal" textLength="45.5" lengthAdjust="spacingAndGlyphs" >1425.69</text>
<text x="1214" y="313.5" font-size="13" fill="#ffff00" text-anchor="end" font-weight="normal" textLength="45.5" lengthAdjust="spacingAndGlyphs" >1797.69</text>
<text x="1230" y="313.5" font-size="13" fill="#fff" text-anchor="start" font-weight="normal" textLength="19.5" lengthAdjust="spacingAndGlyphs" >[m]</text>
<text x="894" y="330.5" font-size="13" fill="#fff" text-anchor="start" font-weight="normal" textLength="106" lengthAdjust="spacingAndGlyphs" >Convective Height:</text>
<text x="1124" y="330.5" font-size="13" fill="#ff0000" text-anchor="end" font-weight="normal" textLength="30.6" lengthAdjust="spacingAndGlyphs" >11.04</text>
<text x="1214" y="330.5" font-size="13" fill="#ff0000" text-anchor="end" font-weight="normal" textLength="31.5" lengthAdjust="spacingAndGlyphs" >10.88</text>
<text x="1230" y="330.5" font-size="13" fill="#fff" text-anchor="start" font-weight="normal" textLength="26.6" lengthAdjust="spacingAndGlyphs" >[km]</text>
<text x="894" y="355.5" font-size="13" fill="#fff" text-anchor="start" font-weight="normal" textLength="106.3" lengthAdjust="spacingAndGlyphs" text-decoration="underline">Convective Indices</text>
<text x="894" y="375.5" font-size="13" fill="#fff" text-anchor="start" font-weight="normal" textLength="96" lengthAdjust="spacingAndGlyphs" >Showalter Index:</text>
<text x="1124" y="375.5" font-size="13" fill="#ff0000" text-anchor="end" font-weight="normal" textLength="24.5" lengthAdjust="spacingAndGlyphs" >0.69</text>
<text x="1230" y="375.5" font-size="13" fill="#fff" text-anchor="start" font-weight="normal" textLength="22.3" lengthAdjust="spacingAndGlyphs" >[°C]</text>
<text x="894" y="392.5" font-size="13" fill="#fff" text-anchor="start" font-weight="normal" textLength="151.1" lengthAdjust="spacingAndGlyphs" >Modified Thompson Index:</text>
<text x="1124" y="392.5" font-size="13" fill="#ff0000" text-anchor="end" font-weight="normal" textLength="31.5" lengthAdjust="spacingAndGlyphs" >47.64</text>
<text x="1230" y="392.5" font-size="13" fill="#fff" text-anchor="start" font-weight="normal" textLength="22.3" lengthAdjust="spacingAndGlyphs" >[°C]</text>
<text x="894" y="409.5" font-size="13" fill="#fff" text-anchor="start" font-weight="normal" textLength="106" lengthAdjust="spacingAndGlyphs" >Total Totals Index:</text>
<text x="1124" y="409.5" font-size="13" fill="#ffff00" text-anchor="end" font-weight="normal" textLength="31.5" lengthAdjust="spacingAndGlyphs" >47.60</text>
<text x="1230" y="409.5" font-size="13" fill="#fff" text-anchor="start" font-weight="normal" textLength="22.3" lengthAdjust="spacingAndGlyphs" >[°C]</text>
<text x="894" y="426.5" font-size="13" fill="#fff" text-anchor="start" font-weight="normal" textLength="58" lengthAdjust="spacingAndGlyphs" >KO Index:</text>
<text x="1124" y="426.5" font-size="13" fill="#ff0000" text-anchor="end" font-weight="normal" textLength="35.7" lengthAdjust="spacingAndGlyphs" >-14.75</text>
<text x="1230" y="426.5" font-size="13" fill="#fff" text-anchor="start" font-weight="normal" textLength="15.6" lengthAdjust="spacingAndGlyphs" >[1]</text>
<text x="894" y="443.5" font-size="13" fill="#fff" text-anchor="start" font-weight="normal" textLength="123.7" lengthAdjust="spacingAndGlyphs" >Craven SigSvr / 1000:</text>
<text x="1124" y="443.5" font-size="13" fill="#ff0000" text-anchor="end" font-weight="normal" textLength="24.5" lengthAdjust="spacingAndGlyphs" >6.48</text>
<text x="1230" y="443.5" font-size="13" fill="#fff" text-anchor="start" font-weight="normal" textLength="54.7" lengthAdjust="spacingAndGlyphs" >[m^3/s^3]</text>
<text x="894" y="460.5" font-size="13" fill="#fff" text-anchor="start" font-weight="normal" textLength="115.6" lengthAdjust="spacingAndGlyphs" >SCP RM (new, old):</text>
<text x="1124" y="460.5" font-size="13" fill="#00ff00" text-anchor="end" font-weight="normal" textLength="24.5" lengthAdjust="spacingAndGlyphs" >0.00</text>
<text x="1124" y="460.5" font-size="13" fill="#fff" text-anchor="start" font-weight="normal" >,</text>
<text x="1136.5" y="460.5" font-size="13" fill="#00ff00" text-anchor="start" font-weight="normal" textLength="24.5" lengthAdjust="spacingAndGlyphs" >0.02</text>
<text x="1230" y="460.5" font-size="13" fill="#fff" text-anchor="start" font-weight="normal" textLength="15.6" lengthAdjust="spacingAndGlyphs" >[1]</text>
<text x="894" y="477.5" font-size="13" fill="#fff" text-anchor="start" font-weight="normal" textLength="89.2" lengthAdjust="spacingAndGlyphs" >STP (new, old):</text>
<text x="1124" y="477.5" font-size="13" fill="#00ff00" text-anchor="end" font-weight="normal" textLength="24.5" lengthAdjust="spacingAndGlyphs" >0.00</text>
<text x="1124" y="477.5" font-size="13" fill="#fff" text-anchor="start" font-weight="normal" >,</text>
<text x="1136.5" y="477.5" font-size="13" fill="#00ff00" text-anchor="start" font-weight="normal" textLength="24.5" lengthAdjust="spacingAndGlyphs" >0.00</text>
<text x="1230" y="477.5" font-size="13" fill="#fff" text-anchor="start" font-weight="normal" textLength="15.6" lengthAdjust="spacingAndGlyphs" >[1]</text>
<text x="894" y="494.5" font-size="13" fill="#fff" text-anchor="start" font-weight="normal" textLength="136.2" lengthAdjust="spacingAndGlyphs" >SB STP (fix) | CWASP:</text>
<text x="1124" y="494.5" font-size="13" fill="#00ff00" text-anchor="end" font-weight="normal" textLength="24.5" lengthAdjust="spacingAndGlyphs" >0.00</text>
<text x="1124" y="494.5" font-size="13" fill="#fff" text-anchor="start" font-weight="normal" >,</text>
<text x="1136.5" y="494.5" font-size="13" fill="#00ff00" text-anchor="start" font-weight="normal" textLength="31.5" lengthAdjust="spacingAndGlyphs" >47.47</text>
<text x="1230" y="494.5" font-size="13" fill="#fff" text-anchor="start" font-weight="normal" textLength="43.3" lengthAdjust="spacingAndGlyphs" >[1], [%]</text>
<text x="894" y="511.5" font-size="13" fill="#fff" text-anchor="start" font-weight="normal" textLength="113.1" lengthAdjust="spacingAndGlyphs" >DCP | MMP | MSP:</text>
<text x="1124" y="511.5" font-size="13" fill="#00ff00" text-anchor="end" font-weight="normal" textLength="24.5" lengthAdjust="spacingAndGlyphs" >0.13</text>
<text x="1124" y="511.5" font-size="13" fill="#fff" text-anchor="start" font-weight="normal" >,</text>
<text x="1136.5" y="511.5" font-size="13" fill="#00ff00" text-anchor="start" font-weight="normal" textLength="24.5" lengthAdjust="spacingAndGlyphs" >7.54</text>
<text x="1162.5" y="511.5" font-size="13" fill="#fff" text-anchor="start" font-weight="normal" >,</text>
<text x="1173.5" y="511.5" font-size="13" fill="#00ff00" text-anchor="start" font-weight="normal" textLength="31.5" lengthAdjust="spacingAndGlyphs" >20.94</text>
<text x="1230" y="511.5" font-size="13" fill="#fff" text-anchor="start" font-weight="normal" textLength="71.8" lengthAdjust="spacingAndGlyphs" >[1], [%], [%]</text>
<text x="894" y="528.5" font-size="13" fill="#fff" text-anchor="start" font-weight="normal" textLength="127.3" lengthAdjust="spacingAndGlyphs" >MB Comp | SHERBE:</text>
<text x="1124" y="528.5" font-size="13" fill="#00ff00" text-anchor="end" font-weight="normal" textLength="24.5" lengthAdjust="spacingAndGlyphs" >0.00</text>
<text x="1124" y="528.5" font-size="13" fill="#fff" text-anchor="start" font-weight="normal" >,</text>
<text x="1136.5" y="528.5" font-size="13" fill="#00ff00" text-anchor="start" font-weight="normal" textLength="24.5" lengthAdjust="spacingAndGlyphs" >0.27</text>
<text x="1230" y="528.5" font-size="13" fill="#fff" text-anchor="start" font-weight="normal" textLength="38.7" lengthAdjust="spacingAndGlyphs" >[1], [1]</text>
<text x="894" y="545.5" font-size="13" fill="#fff" text-anchor="start" font-weight="normal" textLength="145.8" lengthAdjust="spacingAndGlyphs" >Exp. Supercell Index CH:</text>
<text x="1124" y="545.5" font-size="13" fill="#ffff00" text-anchor="end" font-weight="normal" textLength="24.5" lengthAdjust="spacingAndGlyphs" >1.51</text>
<text x="1230" y="545.5" font-size="13" fill="#fff" text-anchor="start" font-weight="normal" textLength="15.6" lengthAdjust="spacingAndGlyphs" >[1]</text>
<text x="894" y="562.5" font-size="13" fill="#fff" text-anchor="start" font-weight="normal" textLength="99.9" lengthAdjust="spacingAndGlyphs" >SWISS 12 Index:</text>
<text x="1124" y="562.5" font-size="13" fill="#ff0000" text-anchor="end" font-weight="normal" textLength="28.7" lengthAdjust="spacingAndGlyphs" >-6.00</text>
<text x="1230" y="562.5" font-size="13" fill="#fff" text-anchor="start" font-weight="normal" textLength="15.6" lengthAdjust="spacingAndGlyphs" >[1]</text>
<text x="894" y="579.5" font-size="13" fill="#fff" text-anchor="start" font-weight="normal" textLength="111.3" lengthAdjust="spacingAndGlyphs" >Precipitable Water:</text>
<text x="1124" y="579.5" font-size="13" fill="#ff0000" text-anchor="end" font-weight="normal" textLength="31.5" lengthAdjust="spacingAndGlyphs" >32.07</text>
<text x="1230" y="579.5" font-size="13" fill="#fff" text-anchor="start" font-weight="normal" textLength="30.5" lengthAdjust="spacingAndGlyphs" >[mm]</text>
<text x="894" y="604.5" font-size="13" fill="#fff" text-anchor="start" font-weight="normal" textLength="101.3" lengthAdjust="spacingAndGlyphs" text-decoration="underline">Wind Parameters</text>
<text x="894" y="624.5" font-size="13" fill="#fff" text-anchor="start" font-weight="normal" textLength="144.4" lengthAdjust="spacingAndGlyphs" >Storm Direction | Motion:</text>
<text x="1124" y="624.5" font-size="13" fill="#ffffff" text-anchor="end" font-weight="normal" textLength="38.5" lengthAdjust="spacingAndGlyphs" >235.34</text>
<text x="1124" y="624.5" font-size="13" fill="#fff" text-anchor="start" font-weight="normal" >,</text>
<text x="1136.5" y="624.5" font-size="13" fill="#00ff00" text-anchor="start" font-weight="normal" textLength="24.5" lengthAdjust="spacingAndGlyphs" >7.84</text>
<text x="1230" y="624.5" font-size="13" fill="#fff" text-anchor="start" font-weight="normal" textLength="47.6" lengthAdjust="spacingAndGlyphs" >[°], [knt]</text>
<text x="894" y="641.5" font-size="13" fill="#fff" text-anchor="start" font-weight="normal" textLength="117.3" lengthAdjust="spacingAndGlyphs" >500m Critical Angle:</text>
<text x="1124" y="641.5" font-size="13" fill="#00ff00" text-anchor="end" font-weight="normal" textLength="38.5" lengthAdjust="spacingAndGlyphs" >313.46</text>
<text x="1230" y="641.5" font-size="13" fill="#fff" text-anchor="start" font-weight="normal" textLength="13.8" lengthAdjust="spacingAndGlyphs" >[°]</text>
<text x="894" y="661.5" font-size="13" fill="#fff" text-anchor="start" font-weight="normal" textLength="108.4" lengthAdjust="spacingAndGlyphs" >SR Wind Sfc-2km:</text>
<text x="1124" y="661.5" font-size="13" fill="#00ff00" text-anchor="end" font-weight="normal" textLength="24.5" lengthAdjust="spacingAndGlyphs" >3.77</text>
<text x="1230" y="661.5" font-size="13" fill="#fff" text-anchor="start" font-weight="normal" textLength="26.6" lengthAdjust="spacingAndGlyphs" >[knt]</text>
<text x="894" y="678.5" font-size="13" fill="#fff" text-anchor="start" font-weight="normal" textLength="114.1" lengthAdjust="spacingAndGlyphs" >SR Wind 4km-6km:</text>
<text x="1124" y="678.5" font-size="13" fill="#00ff00" text-anchor="end" font-weight="normal" textLength="24.5" lengthAdjust="spacingAndGlyphs" >3.86</text>
<text x="1230" y="678.5" font-size="13" fill="#fff" text-anchor="start" font-weight="normal" textLength="26.6" lengthAdjust="spacingAndGlyphs" >[knt]</text>
<text x="894" y="695.5" font-size="13" fill="#fff" text-anchor="start" font-weight="normal" textLength="121.2" lengthAdjust="spacingAndGlyphs" >SR Wind 9km-11km:</text>
<text x="1124" y="695.5" font-size="13" fill="#ff0000" text-anchor="end" font-weight="normal" textLength="31.5" lengthAdjust="spacingAndGlyphs" >12.74</text>
<text x="1230" y="695.5" font-size="13" fill="#fff" text-anchor="start" font-weight="normal" textLength="48.7" lengthAdjust="spacingAndGlyphs" >[knt] HP</text>
<text x="894" y="715.5" font-size="13" fill="#fff" text-anchor="start" font-weight="normal" textLength="122" lengthAdjust="spacingAndGlyphs" >Effective Shear 6000:</text>
<text x="1124" y="715.5" font-size="13" fill="#00ff00" text-anchor="end" font-weight="normal" textLength="31.5" lengthAdjust="spacingAndGlyphs" >10.16</text>
<text x="1230" y="715.5" font-size="13" fill="#fff" text-anchor="start" font-weight="normal" textLength="26.6" lengthAdjust="spacingAndGlyphs" >[knt]</text>
<text x="894" y="735.5" font-size="13" fill="#fff" text-anchor="start" font-weight="normal" textLength="147.9" lengthAdjust="spacingAndGlyphs" >Bulk Richardson Number:</text>
<text x="1124" y="735.5" font-size="13" fill="#ffff00" text-anchor="end" font-weight="normal" textLength="38.5" lengthAdjust="spacingAndGlyphs" >267.03</text>
<text x="1214" y="735.5" font-size="13" fill="#ffff00" text-anchor="end" font-weight="normal" textLength="38.5" lengthAdjust="spacingAndGlyphs" >423.45</text>
<text x="1230" y="735.5" font-size="13" fill="#fff" text-anchor="start" font-weight="normal" textLength="15.6" lengthAdjust="spacingAndGlyphs" >[1]</text>
<text x="894" y="755.5" font-size="13" fill="#fff" text-anchor="start" font-weight="normal" textLength="112.3" lengthAdjust="spacingAndGlyphs" >3km Effective SRH:</text>
<text x="1124" y="755.5" font-size="13" fill="#00ff00" text-anchor="end" font-weight="normal" textLength="24.5" lengthAdjust="spacingAndGlyphs" >7.57</text>
<text x="1230" y="755.5" font-size="13" fill="#fff" text-anchor="start" font-weight="normal" textLength="54.7" lengthAdjust="spacingAndGlyphs" >[m^2/s^2]</text>
<text x="894" y="772.5" font-size="13" fill="#fff" text-anchor="start" font-weight="normal" textLength="174.2" lengthAdjust="spacingAndGlyphs" >Max 3km SRH (0-2km) | AGL:</text>
<text x="1124" y="772.5" font-size="13" fill="#00ff00" text-anchor="end" font-weight="normal" textLength="35.7" lengthAdjust="spacingAndGlyphs" >-13.05</text>
<text x="1124" y="772.5" font-size="13" fill="#fff" text-anchor="start" font-weight="normal" >,</text>
<text x="1136.5" y="772.5" font-size="13" fill="#00ff00" text-anchor="start" font-weight="normal" textLength="45.5" lengthAdjust="spacingAndGlyphs" >1394.00</text>
<text x="1230" y="772.5" font-size="13" fill="#fff" text-anchor="start" font-weight="normal" textLength="81.4" lengthAdjust="spacingAndGlyphs" >[m^2/s^2], [m]</text>
<text x="894" y="792.5" font-size="13" fill="#fff" text-anchor="start" font-weight="normal" textLength="156.1" lengthAdjust="spacingAndGlyphs" >3km Energy Helicity Index:</text>
<text x="1124" y="792.5" font-size="13" fill="#00ff00" text-anchor="end" font-weight="normal" textLength="24.5" lengthAdjust="spacingAndGlyphs" >0.06</text>
<text x="1214" y="792.5" font-size="13" fill="#00ff00" text-anchor="end" font-weight="normal" textLength="24.5" lengthAdjust="spacingAndGlyphs" >0.09</text>
<text x="1230" y="792.5" font-size="13" fill="#fff" text-anchor="start" font-weight="normal" textLength="15.6" lengthAdjust="spacingAndGlyphs" >[1]</text>
<text x="894" y="809.5" font-size="13" fill="#fff" text-anchor="start" font-weight="normal" textLength="141.5" lengthAdjust="spacingAndGlyphs" >3km Vorticity Gen. Pot.:</text>
<text x="1124" y="809.5" font-size="13" fill="#00ff00" text-anchor="end" font-weight="normal" textLength="24.5" lengthAdjust="spacingAndGlyphs" >0.05</text>
<text x="1214" y="809.5" font-size="13" fill="#00ff00" text-anchor="end" font-weight="normal" textLength="24.5" lengthAdjust="spacingAndGlyphs" >0.07</text>
<text x="1230" y="809.5" font-size="13" fill="#fff" text-anchor="start" font-weight="normal" textLength="42.3" lengthAdjust="spacingAndGlyphs" >[m/s^2]</text>
<text x="894" y="39.5" font-size="13" fill="#fff" text-anchor="start" font-weight="normal" textLength="60.8" lengthAdjust="spacingAndGlyphs" text-decoration="underline">Parameter</text>
<text x="1124" y="39.5" font-size="13" fill="#fff" text-anchor="end" font-weight="normal" text-decoration="underline">Value LCL</text>
<text x="1214" y="39.5" font-size="13" fill="#fff" text-anchor="end" font-weight="normal" text-decoration="underline">Value CCL</text>
<text x="1230" y="39.5" font-size="13" fill="#fff" text-anchor="start" font-weight="normal" text-decoration="underline">Unit</text>
<rect x="729" y="827" width="15" height="8" fill="#ff0000"/>
<text x="753" y="835.5" font-size="13" fill="#ff0000" text-anchor="start" font-weight="normal" textLength="112.7" lengthAdjust="spacingAndGlyphs" >Temperature Profile</text>
<rect x="729" y="847" width="15" height="8" fill="#00ffff"/>
<text x="753" y="855.5" font-size="13" fill="#00ffff" text-anchor="start" font-weight="normal" textLength="93" lengthAdjust="spacingAndGlyphs" >Dewpoint Profile</text>
<rect x="729" y="867" width="15" height="8" fill="#00ff00"/>
<text x="753" y="875.5" font-size="13" fill="#00ff00" text-anchor="start" font-weight="normal" textLength="137.2" lengthAdjust="spacingAndGlyphs" >OBS Windspeed Profile</text>
<rect x="729" y="887" width="15" height="8" fill="#ff0080"/>
<text x="753" y="895.5" font-size="13" fill="#ff0080" text-anchor="start" font-weight="normal" textLength="127.5" lengthAdjust="spacingAndGlyphs" >SR Windspeed Profile</text>
<rect x="729" y="907" width="15" height="8" fill="#c8c800"/>
<text x="753" y="915.5" font-size="13" fill="#c8c800" text-anchor="start" font-weight="normal" textLength="223.4" lengthAdjust="spacingAndGlyphs" >Sfc-3km Storm Relative Helicity Profile</text>
<rect x="729" y="927" width="15" height="8" fill="#3c3c00"/>
<text x="753" y="935.5" font-size="13" fill="#3c3c00" text-anchor="start" font-weight="normal" textLength="205.6" lengthAdjust="spacingAndGlyphs" >Effective Layer (CAPE >= 100 J/kg)</text>
<rect x="1079" y="827" width="15" height="8" fill="#00ff00"/>
<text x="1103" y="835.5" font-size="13" fill="#00ff00" text-anchor="start" font-weight="normal" textLength="184" lengthAdjust="spacingAndGlyphs" >No / Non Severe Thunderstorms</text>
<rect x="1079" y="847" width="15" height="8" fill="#ffff00"/>
<text x="1103" y="855.5" font-size="13" fill="#ffff00" text-anchor="start" font-weight="normal" textLength="212.3" lengthAdjust="spacingAndGlyphs" >Scattered / Moderate Thunderstorms</text>
<rect x="1079" y="867" width="15" height="8" fill="#ff0000"/>
<text x="1103" y="875.5" font-size="13" fill="#ff0000" text-anchor="start" font-weight="normal" textLength="210.5" lengthAdjust="spacingAndGlyphs" >Widespread / Severe Thunderstorms</text>
</svg></body></html>
